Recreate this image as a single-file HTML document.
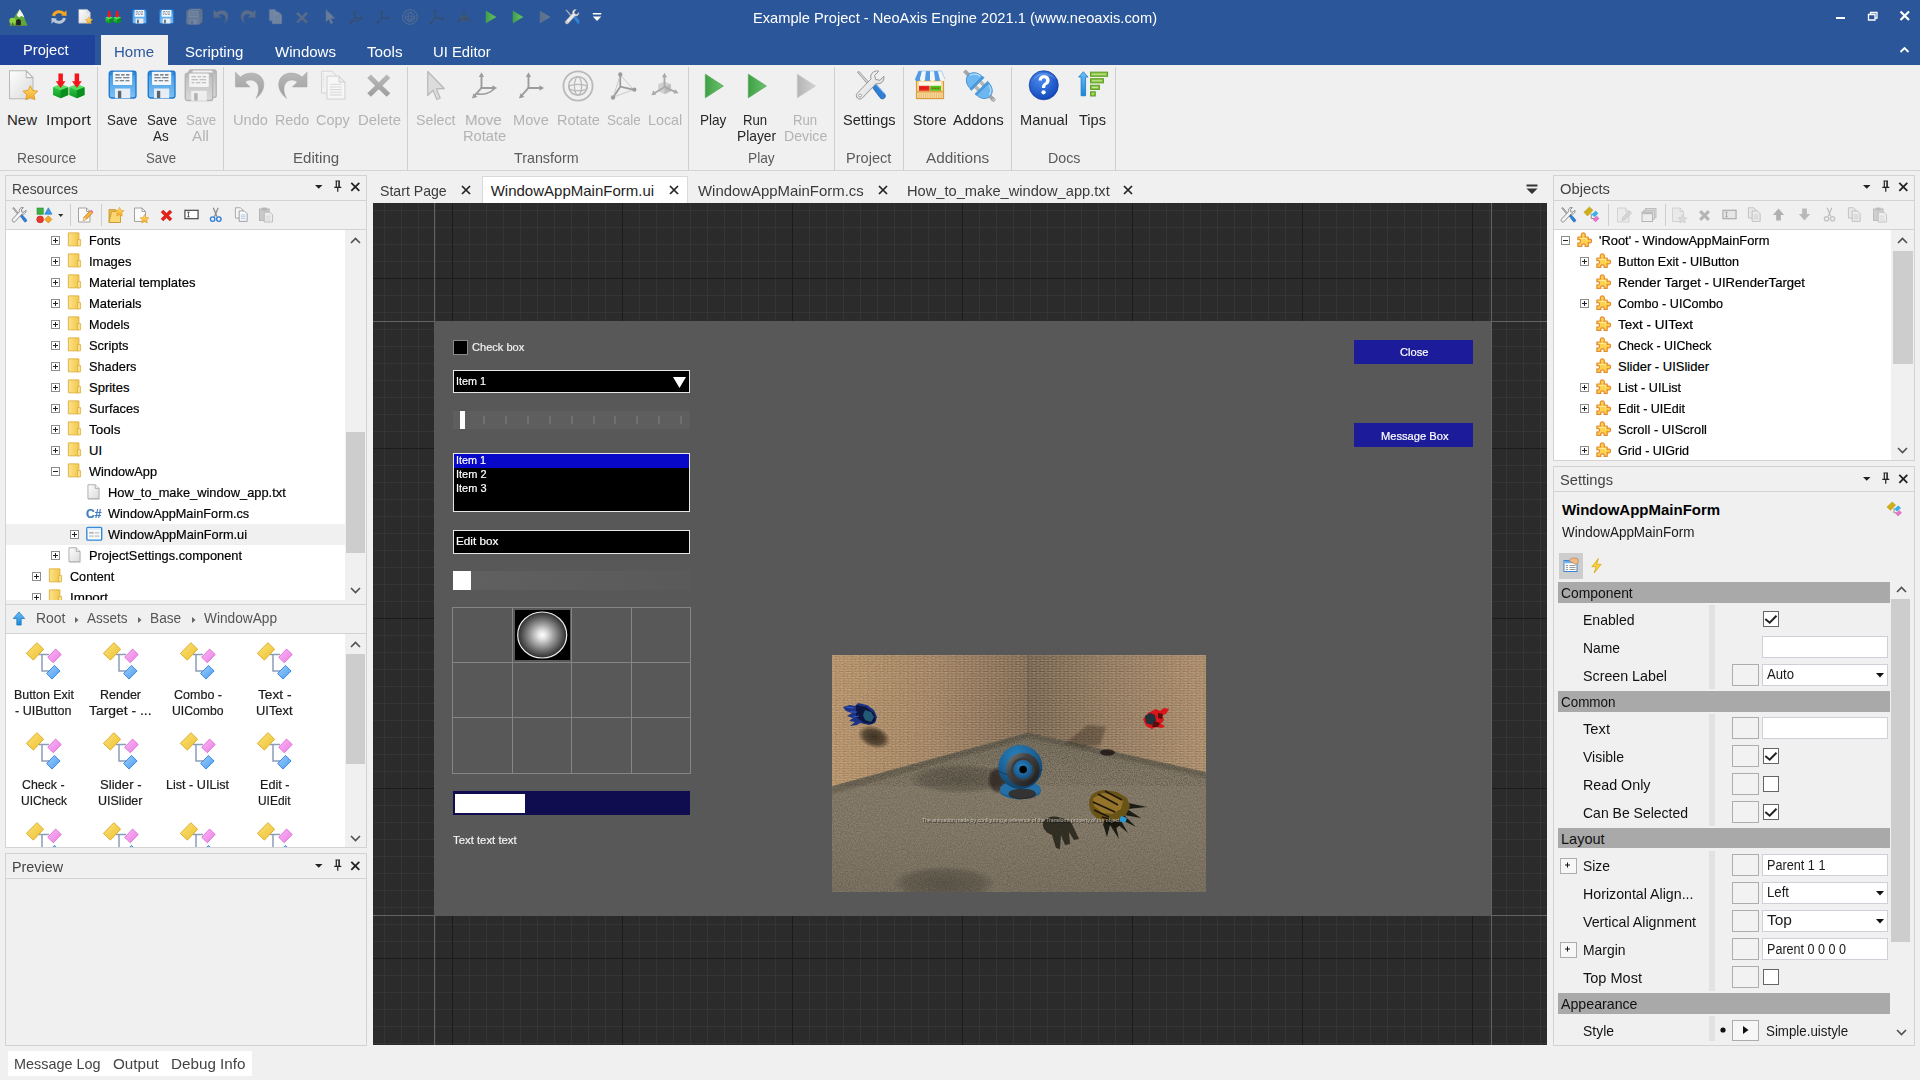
<!DOCTYPE html><html><head><meta charset="utf-8"><title>NeoAxis Engine</title><style>html,body{margin:0;padding:0}body{width:1920px;height:1080px;overflow:hidden;position:relative;background:#f0f0f0;font-family:"Liberation Sans",sans-serif}
div,span,svg{position:absolute}
.t{white-space:pre;transform-origin:0 0}.s{-webkit-text-stroke:.2px currentColor}
.i{overflow:visible}
</style></head><body><svg width="0" height="0" style="position:absolute"><defs>
<linearGradient id="gPaper" x1="0" y1="0" x2="1" y2="1"><stop offset="0" stop-color="#fefefe"/><stop offset="1" stop-color="#d9dadb"/></linearGradient>
<linearGradient id="gStar" x1="0" y1="0" x2="0" y2="1"><stop offset="0" stop-color="#ffe27a"/><stop offset="1" stop-color="#f5a623"/></linearGradient>
<linearGradient id="gCube" x1="0" y1="0" x2="0" y2="1"><stop offset="0" stop-color="#3fd14f"/><stop offset="1" stop-color="#0b9a22"/></linearGradient>
<linearGradient id="gFlop" x1="0" y1="0" x2="0" y2="1"><stop offset="0" stop-color="#3f97e4"/><stop offset="1" stop-color="#7cc0f3"/></linearGradient>
<linearGradient id="gFlopG" x1="0" y1="0" x2="0" y2="1"><stop offset="0" stop-color="#bdbdbd"/><stop offset="1" stop-color="#d9d9d9"/></linearGradient>
<linearGradient id="gGray" x1="0" y1="0" x2="0" y2="1"><stop offset="0" stop-color="#b9b9b9"/><stop offset="1" stop-color="#9d9d9d"/></linearGradient>
<linearGradient id="gPlay" x1="0" y1="0" x2="1" y2="0"><stop offset="0" stop-color="#3f9f45"/><stop offset="1" stop-color="#6cc26f"/></linearGradient>
<linearGradient id="gPlayG" x1="0" y1="0" x2="1" y2="0"><stop offset="0" stop-color="#b4b4b4"/><stop offset="1" stop-color="#d2d2d2"/></linearGradient>
<radialGradient id="gHelp" cx="0.4" cy="0.3" r="0.8"><stop offset="0" stop-color="#4a8bf0"/><stop offset="1" stop-color="#0c3fb3"/></radialGradient>
<linearGradient id="gFolder" x1="0" y1="0" x2="1" y2="0"><stop offset="0" stop-color="#fbe28a"/><stop offset="1" stop-color="#f3c84a"/></linearGradient>
<linearGradient id="gUp" x1="0" y1="0" x2="0" y2="1"><stop offset="0" stop-color="#6cc0f6"/><stop offset="1" stop-color="#1a86d8"/></linearGradient>
<linearGradient id="gMetal" x1="0" y1="0" x2="1" y2="1"><stop offset="0" stop-color="#ffffff"/><stop offset=".6" stop-color="#e4e4e4"/><stop offset="1" stop-color="#b8b8b8"/></linearGradient>
<symbol id="i-docnew" viewBox="0 0 32 32" overflow="visible" preserveAspectRatio="none"><path d="M1.5 .8H18L24.6 7.5V28.3H1.5Z" fill="url(#gPaper)" stroke="#b9b9b9" stroke-width="1"/>
<path d="M18 .8V7.5H24.6Z" fill="#f6f6f6" stroke="#b9b9b9" stroke-width="1" stroke-linejoin="round"/>
<path d="M22 15.5l2.2 4.7 5.1.6-3.8 3.5 1 5.1-4.5-2.6-4.5 2.6 1-5.1-3.8-3.5 5.1-.6z" fill="url(#gStar)" stroke="#e59a1c" stroke-width=".9" stroke-linejoin="round"/></symbol><symbol id="i-import" viewBox="0 0 32 32" overflow="visible" preserveAspectRatio="none"><g>
<path d="M1 17.5l7.5-3 7.5 3v8l-7.5 3.3L1 25.5z" fill="url(#gCube)"/>
<path d="M1 17.5l7.5 3 7.5-3-7.5-3z" fill="#58e066"/>
<path d="M8.5 20.5v8.3L16 25.5v-8z" fill="#0a8f1f"/>
<path d="M6.3 3.5h4.4v8h2.6L8.5 18.2 3.7 11.5h2.6z" fill="#f5151b"/>
<path d="M17 17.5l7.5-3 7.5 3v8l-7.5 3.3-7.5-3.3z" fill="url(#gCube)"/>
<path d="M17 17.5l7.5 3 7.5-3-7.5-3z" fill="#58e066"/>
<path d="M24.5 20.5v8.3l7.500-3.3v-8z" fill="#0a8f1f"/>
<path d="M22.3 3.500h4.400v8h2.600L24.500 18.200 19.700 11.500h2.600z" fill="#f5151b"/>
</g></symbol><symbol id="i-save" viewBox="0 0 32 32" overflow="visible" preserveAspectRatio="none"><rect x="1.3" y="1.3" width="27.4" height="27.4" rx="2.2" fill="url(#gFlop)" stroke="#1f78cf" stroke-width="1.4"/>
<rect x="5.200" y="1.800" width="19.600" height="13.500" rx=".8" fill="#f4f8fc"/>
<path d="M7.500 5h4.500m1.500 0h3.500m1.500 0h3.500M7.500 8h6.500m1.500 0h6.500M7.500 11h3m1.500 0h4.500m1.500 0h4" stroke="#555d66" stroke-width="1.100"/>
<rect x="7.200" y="19" width="15.600" height="10" fill="#e6edf5"/>
<rect x="10.200" y="21.400" width="3.400" height="7.400" fill="#5b6570"/>
<path d="M3.200 2.500v3M26.800 2.500v3" stroke="#1f78cf" stroke-width="1.200"/></symbol><symbol id="i-saveall" viewBox="0 0 32 32" overflow="visible" preserveAspectRatio="none"><g transform="translate(3.500 -1.300)"><rect x="1.3" y="1.3" width="27.4" height="27.4" rx="2.2" fill="url(#gFlopG)" stroke="#b3b3b3" stroke-width="1.4"/>
<rect x="5.200" y="1.800" width="19.600" height="13.500" rx=".8" fill="#f1f1f1"/>
<path d="M7.500 5h4.500m1.500 0h3.500m1.500 0h3.500M7.500 8h6.500m1.500 0h6.500M7.500 11h3m1.500 0h4.500m1.500 0h4" stroke="#b8b8b8" stroke-width="1.100"/>
<rect x="7.200" y="19" width="15.600" height="10" fill="#ebebeb"/>
<rect x="10.200" y="21.400" width="3.400" height="7.400" fill="#b5b5b5"/>
<path d="M3.200 2.500v3M26.800 2.500v3" stroke="#b3b3b3" stroke-width="1.200"/></g><g transform="translate(0 1.800)"><rect x="1.3" y="1.3" width="27.4" height="27.4" rx="2.2" fill="url(#gFlopG)" stroke="#b3b3b3" stroke-width="1.4"/>
<rect x="5.200" y="1.800" width="19.600" height="13.500" rx=".8" fill="#f3f3f3"/>
<path d="M7.500 5h4.500m1.500 0h3.500m1.500 0h3.500M7.500 8h6.500m1.500 0h6.500M7.500 11h3m1.500 0h4.500m1.500 0h4" stroke="#b0b0b0" stroke-width="1.100"/>
<rect x="7.200" y="19" width="15.600" height="10" fill="#eeeeee"/>
<rect x="10.200" y="21.400" width="3.400" height="7.400" fill="#b0b0b0"/>
<path d="M3.200 2.500v3M26.800 2.500v3" stroke="#b3b3b3" stroke-width="1.200"/></g></symbol><symbol id="i-undo" viewBox="0 0 32 32" overflow="visible" preserveAspectRatio="none"><path d="M1.500 2.200V17.200H16.300L11.300 12.200C16.500 8.200 23.500 10.500 24.800 17 25.600 21 24.300 25.300 22.300 28.800 29 23.500 32 16.500 29.300 10 26 2 13.800 .8 6.500 7.200Z" fill="url(#gGray)" stroke="#a8a8a8" stroke-width=".6"/></symbol><symbol id="i-redo" viewBox="0 0 32 32" overflow="visible" preserveAspectRatio="none"><g transform="translate(32 0) scale(-1 1)"><path d="M1.500 2.200V17.200H16.300L11.300 12.200C16.500 8.200 23.500 10.500 24.800 17 25.600 21 24.300 25.300 22.300 28.800 29 23.500 32 16.500 29.300 10 26 2 13.800 .8 6.500 7.200Z" fill="url(#gGray)" stroke="#a8a8a8" stroke-width=".6"/></g></symbol><symbol id="i-copy" viewBox="0 0 32 32" overflow="visible" preserveAspectRatio="none"><path d="M4.800 1.200H15.500L20.500 6v17.500H4.800z" fill="#f3f3f3" stroke="#d2d2d2"/>
<path d="M6.300 4.500h1.200m-1.200 2.500h1.200m-1.200 2.500h1.200m-1.200 2.500h1.200m-1.200 2.500h1.200m-1.200 2.500h1.200" stroke="#d8d8d8" stroke-width="1"/>
<path d="M10.500 6.200H23L29.300 12.300V29.500H10.500z" fill="#f7f7f7" stroke="#d0d0d0"/>
<path d="M23 6.200v6.100h6.300z" fill="#ececec" stroke="#d0d0d0" stroke-linejoin="round"/>
<path d="M13.500 14.500h12.500m-12.500 2.700h12.500m-12.500 2.700h12.500m-12.500 2.700h12.500m-12.500 2.700h12.500" stroke="#d9d9d9" stroke-width="1.100"/></symbol><symbol id="i-delete" viewBox="0 0 32 32" overflow="visible" preserveAspectRatio="none"><path d="M8 5.800l8 8 8-8 3.700 3.700-8 8 8 8L24 29.200l-8-8-8 8-3.700-3.700 8-8-8-8z" fill="url(#gGray)"/></symbol><symbol id="i-select" viewBox="0 0 32 32" overflow="visible" preserveAspectRatio="none"><path d="M10.200 1.500V25.500L15.800 20.200 19.800 29.500 23.300 28 19.300 18.800 27.500 18.500Z" fill="#dcdcdc" stroke="#b8b8b8" stroke-width="1.300" stroke-linejoin="round"/></symbol><symbol id="i-moverot" viewBox="0 0 32 32" overflow="visible" preserveAspectRatio="none"><g stroke="#9c9c9c" stroke-width="2" fill="#9c9c9c" stroke-linecap="round"><path d="M13.300 18.500V5.500" /><path d="M13.300 18.500H26"/><path d="M13.300 18.500L5.500 27"/>
<path d="M13.300 2.200l2.800 5h-5.600z M30 18.500l-5 2.800v-5.600z M3.200 29.500l1.600-5.500 4.100 3.800z" stroke="none"/>
<path d="M8 24.500C15 26 23 24 27 19" fill="none" stroke-width="1.600"/></g></symbol><symbol id="i-move" viewBox="0 0 32 32" overflow="visible" preserveAspectRatio="none"><g stroke="#9c9c9c" stroke-width="2" fill="#9c9c9c" stroke-linecap="round"><path d="M13.300 18.500V5.500" /><path d="M13.300 18.500H26"/><path d="M13.300 18.500L5.500 27"/>
<path d="M13.300 2.200l2.800 5h-5.600z M30 18.500l-5 2.800v-5.600z M3.200 29.500l1.600-5.500 4.100 3.800z" stroke="none"/></g></symbol><symbol id="i-rotate" viewBox="0 0 32 32" overflow="visible" preserveAspectRatio="none"><g fill="none" stroke="#b9b9b9"><circle cx="16" cy="16" r="14.600" stroke-width="1.800"/><circle cx="16" cy="16" r="9.300" stroke-width="1.600"/>
<ellipse cx="16" cy="16" rx="3.600" ry="9.300" stroke-width="1.300"/><ellipse cx="16" cy="17.500" rx="9.300" ry="3.200" stroke-width="1.300"/></g></symbol><symbol id="i-scale" viewBox="0 0 32 32" overflow="visible" preserveAspectRatio="none"><g stroke="#9c9c9c" fill="#9c9c9c"><path d="M12 16.500V4M12 16.500L26 19.500M12 16.500L4.500 27.500" stroke-width="1.900"/>
<path d="M12 4L26 19.500L4.500 27.500Z" fill="none" stroke-width=".8" stroke="#bdbdbd"/>
<circle cx="12" cy="3.600" r="2.300" stroke="none"/><circle cx="27" cy="19.500" r="2.300" stroke="none"/><circle cx="4.300" cy="27.800" r="2.300" stroke="none"/></g></symbol><symbol id="i-local" viewBox="0 0 32 32" overflow="visible" preserveAspectRatio="none"><g stroke="#a9a9a9" fill="#a9a9a9"><path d="M9.500 14.500l6.500-2.500 6.500 2.500v7.500L16 25l-6.500-3z" fill="#d0d0d0" stroke="none"/><path d="M16 17.500v7.500l6.500-3v-7.500z" fill="#bcbcbc" stroke="none"/>
<path d="M16 17.500V6M16 17.500L27 22.500M16 17.500L5.500 24" stroke-width="1.900"/>
<path d="M16 2.800l2.600 4.800h-5.200z M30.500 24l-5.400.3 2.200-4.500z M2.500 26l2-5 3 4.400z" stroke="none"/></g></symbol><symbol id="i-play" viewBox="0 0 32 32" overflow="visible" preserveAspectRatio="none"><path d="M6 4.200V27.800L26.200 16Z" fill="url(#gPlay)" stroke="#4aa84f" stroke-width=".8" stroke-linejoin="round"/></symbol><symbol id="i-playg" viewBox="0 0 32 32" overflow="visible" preserveAspectRatio="none"><path d="M6 4.200V27.800L26.200 16Z" fill="url(#gPlayG)" stroke="#c4c4c4" stroke-width=".8" stroke-linejoin="round"/></symbol><symbol id="i-settings" viewBox="0 0 32 32" overflow="visible" preserveAspectRatio="none"><g>
<path d="M3.500 2.200L5 1.500 16.500 14.500 14.800 16Z" fill="#d9d9d9" stroke="#8d8d8d" stroke-width=".8"/>
<path d="M15 13.200l3-2.600L30.600 24.800c1.200 1.500.9 3.300-.3 4.300s-3 1-4.200-.5z" fill="#2f7fd6" stroke="#1b5fae" stroke-width=".8"/>
<path d="M17 12l1.500-1.300L30.200 24" stroke="#7db9f2" stroke-width="1.100" fill="none"/>
<path d="M29.800 6.500c.6 2.800-.3 5.300-2.600 6.800-1.600 1-3.400 1.200-5 .7L8.500 28.800c-1.300 1.500-3.500 1.600-5 .3s-1.600-3.500-.3-5L17 9.200c-.9-2.700.1-5.700 2.600-7.300 1.700-1 3.500-1.200 5.200-.6L20.500 5.800l1.300 4 4.100.8z" fill="url(#gMetal)" stroke="#8a8a8a" stroke-width=".9" stroke-linejoin="round"/>
<circle cx="6" cy="26.300" r="1.500" fill="#f5f5f5" stroke="#8a8a8a" stroke-width=".7"/></g></symbol><symbol id="i-store" viewBox="0 0 32 32" overflow="visible" preserveAspectRatio="none"><g>
<rect x="2.500" y="11" width="27" height="18.500" fill="#f7d9a0" stroke="#d99a3e" stroke-width="1.200"/>
<rect x="4.800" y="12" width="22.400" height="5" fill="#fff6e4"/>
<rect x="5" y="16.300" width="10.500" height="5.200" fill="#e8251f"/><rect x="16.200" y="16.300" width="10.800" height="5.200" fill="#4cc417"/>
<path d="M6.500 18.500h7M17.500 18.800h7.500" stroke="#b8160f" stroke-width=".8" stroke-dasharray="2 1"/>
<rect x="2.500" y="21.500" width="27" height="1.800" fill="#e3a54b"/>
<path d="M5 24v5M7.200 24v5M9.400 24v5M11.600 24v5M13.800 24v5M16 24v5M18.200 24v5M20.400 24v5M22.600 24v5M24.800 24v5M27 24v5" stroke="#e9b566" stroke-width=".9"/>
<path d="M4.500 1L1 9.500c0 2.600 5 2.600 5 0L8 1z" fill="#4f9be8"/><path d="M8 1L6 9.500c0 2.600 5 2.600 5 0L12 1z" fill="#f5f5f5"/>
<path d="M12 1L11 9.500c0 2.600 5 2.600 5 0V1z" fill="#4f9be8"/><path d="M16 1v8.500c0 2.600 5 2.600 5 0L20 1z" fill="#f5f5f5"/>
<path d="M20 1l1 8.500c0 2.600 5 2.600 5 0L24 1z" fill="#4f9be8"/><path d="M24 1l2 8.500c0 2.600 5 2.600 5 0L27.500 1z" fill="#f5f5f5"/>
<path d="M4.500 1h23L31 9.500" fill="none" stroke="#7fb4ea" stroke-width=".6"/></g></symbol><symbol id="i-addons" viewBox="0 0 32 32" overflow="visible" preserveAspectRatio="none"><g transform="translate(16.200 15.500) rotate(45)">
<rect x="-20.500" y="-1.600" width="6" height="3.200" fill="#a6a6a6" stroke="#858585" stroke-width=".5"/>
<path d="M-3.500 -8.800V8.800C-10.500 8.800 -15 4.500 -15 0S-10.500 -8.800 -3.500 -8.800Z" fill="#6db7f1" stroke="#3f8fd4" stroke-width=".9"/>
<path d="M-5.500 -7.500C-10 -7 -13 -3.500 -13.500 -.5" stroke="#b5dcf9" stroke-width="1.300" fill="none"/>
<rect x="-3.500" y="-9.300" width="2.200" height="18.600" fill="#4a9be0" stroke="#3585cc" stroke-width=".5"/>
<rect x="-1.300" y="-5" width="5" height="2.800" fill="#b9b9b9" stroke="#858585" stroke-width=".5"/><rect x="-1.300" y="2.200" width="5" height="2.800" fill="#b9b9b9" stroke="#858585" stroke-width=".5"/>
<rect x="3.700" y="-9.300" width="2.200" height="18.600" fill="#4a9be0" stroke="#3585cc" stroke-width=".5"/>
<path d="M5.900 -8.800V8.800C12.500 8.800 16.500 4.500 16.500 0S12.500 -8.800 5.900 -8.800Z" fill="#6db7f1" stroke="#3f8fd4" stroke-width=".9"/>
<path d="M8 -7.300C12 -6.500 14.500 -3.500 15 -.5" stroke="#b5dcf9" stroke-width="1.300" fill="none"/>
<rect x="16.500" y="-1.600" width="4.500" height="3.200" fill="#a6a6a6" stroke="#858585" stroke-width=".5"/><circle cx="21.500" cy="0" r="1.800" fill="#c2c2c2" stroke="#858585" stroke-width=".5"/></g></symbol><symbol id="i-manual" viewBox="0 0 32 32" overflow="visible" preserveAspectRatio="none"><circle cx="16" cy="15.500" r="14.800" fill="url(#gHelp)" stroke="#0b389f" stroke-width=".7"/>
<path d="M2.500 14C6 6 20 2 28.500 9.500 24 1.500 9 -1.500 2.500 14z" fill="#fff" opacity=".18"/>
<path d="M10.800 10.700c0-3.400 2.400-5.400 5.500-5.400 3.300 0 5.700 2 5.700 5 0 2.500-1.500 3.700-3 4.800-1.100.8-1.500 1.500-1.500 3.200h-3.400c0-2.700.8-3.800 2.400-5 1.100-.8 1.800-1.500 1.800-2.700 0-1.300-.9-2.100-2.100-2.100-1.300 0-2.100.9-2.100 2.200z" fill="#fff"/><circle cx="15.800" cy="22.700" r="2.200" fill="#fff"/></symbol><symbol id="i-tips" viewBox="0 0 32 32" overflow="visible" preserveAspectRatio="none"><g><path d="M5.500 1.800L10.300 7.500H7.800V27.500H3.200V7.500H.7Z" fill="url(#gUp)" stroke="#1676c4" stroke-width=".8" stroke-linejoin="round"/>
<g fill="#8cc63f" stroke="#5a9e23" stroke-width="1.100"><rect x="13" y="2.300" width="17.500" height="4.400"/><rect x="13" y="9.300" width="13.200" height="4.400"/><rect x="13" y="16.300" width="9" height="4.400"/><rect x="13" y="23.300" width="4.800" height="4.400"/></g>
<path d="M14.500 4.500h14.500M14.500 11.500h10.200M14.500 18.500h6M14.500 25.500h1.800" stroke="#c5e59a" stroke-width="1.200"/></g></symbol><symbol id="i-logo" viewBox="0 0 16 16" overflow="visible" preserveAspectRatio="none"><g transform="scale(.5)"><path d="M1 31L13 9 18 2 23 10 31 31Z" fill="#5fa83a"/><path d="M18 2l5 8 3 7-5-3-4 3-4-4z" fill="#f4f4f4"/><path d="M12 31v-8c0-4 8-4 8 0v8z" fill="#222"/><circle cx="6" cy="23" r="5.500" fill="#8fd43f"/><rect x="5" y="26" width="2" height="5" fill="#7a4a20"/><path d="M0 31h32v1H0z" fill="#6a8a3a"/></g></symbol><symbol id="i-refresh" viewBox="0 0 16 16" overflow="visible" preserveAspectRatio="none"><g fill="none" stroke-width="3"><path d="M2.500 7C3.500 2.500 10 1 13 5" stroke="#f5a623"/><path d="M13.500 9C12.500 13.500 6 15 3 11" stroke="#b9c6d6"/></g><path d="M10 6.500l5.500.5V1.200z" fill="#f5a623"/><path d="M6 9.500L.5 9v5.800z" fill="#b9c6d6"/></symbol><symbol id="i-caretdn" viewBox="0 0 16 16" overflow="visible" preserveAspectRatio="none"><path d="M3 4h9v1.600H3zM3 7.500h9L7.500 12z" fill="#fff"/></symbol><symbol id="i-tools16" viewBox="0 0 16 16" overflow="visible" preserveAspectRatio="none"><g transform="scale(.5)"><path d="M3.500 2.200L5.500 1.200 16.500 14.500 14.800 16Z" fill="#e4e4e4" stroke="#777" stroke-width="1.600"/>
<path d="M15 13.200l3-2.600L30.600 24.800c1.200 1.500.9 3.300-.3 4.300s-3 1-4.200-.5z" fill="#2f7fd6" stroke="#1b5fae" stroke-width="1.200"/>
<path d="M29.800 6.500c.6 2.800-.3 5.300-2.600 6.800-1.600 1-3.400 1.200-5 .7L8.500 28.800c-1.300 1.500-3.500 1.600-5 .3s-1.600-3.500-.3-5L17 9.200c-.9-2.700.1-5.700 2.600-7.300 1.700-1 3.500-1.200 5.200-.6L20.500 5.800l1.300 4 4.100.8z" fill="#f4f4f4" stroke="#7a7a7a" stroke-width="1.700" stroke-linejoin="round"/></g></symbol><symbol id="i-shapes" viewBox="0 0 16 16" overflow="visible" preserveAspectRatio="none"><rect x="1" y="1" width="6" height="6" fill="#3cb043" stroke="#27862d" stroke-width=".6"/><path d="M12 .800L15.500 7H8.500z" fill="#3d9be9" stroke="#1f78c8" stroke-width=".6"/><circle cx="4" cy="12" r="3.300" fill="#ea3a2d" stroke="#b9261b" stroke-width=".6"/><path d="M12 8.500L15.500 12 12 15.500 8.500 12z" fill="#f6a623" stroke="#cf8512" stroke-width=".6"/></symbol><symbol id="i-edit" viewBox="0 0 16 16" overflow="visible" preserveAspectRatio="none"><path d="M1.500 1h8l3.500 3.500V15H1.500z" fill="#fbfbfb" stroke="#9a9a9a" stroke-width=".9"/><path d="M9.500 1v3.500H13" fill="none" stroke="#9a9a9a" stroke-width=".9"/><path d="M6 13.500l1-3.300 6.300-6.500 2.300 2.300-6.400 6.500z" fill="#f7b13c" stroke="#b9772a" stroke-width=".7"/><path d="M6 13.500l1-3.300 2.200 2.300z" fill="#f6d7b0"/><path d="M13.300 3.700l1-1 2 2.300-.8 1z" fill="#e86a9a"/></symbol><symbol id="i-editg" viewBox="0 0 16 16" overflow="visible" preserveAspectRatio="none"><path d="M1.500 1h8l3.500 3.500V15H1.500z" fill="#ebebeb" stroke="#cfcfcf" stroke-width=".9"/><path d="M9.500 1v3.500H13" fill="none" stroke="#cfcfcf" stroke-width=".9"/><path d="M6 13.500l1-3.300 6.300-6.500 2.300 2.300-6.400 6.500z" fill="#d6d6d6" stroke="#c2c2c2" stroke-width=".7"/></symbol><symbol id="i-newfolder" viewBox="0 0 16 16" overflow="visible" preserveAspectRatio="none"><path d="M1 2.500h6.500l1 1.500H11V15.500H1z" fill="#e9b949" stroke="#c4922b" stroke-width=".8"/><path d="M3.500 4.500h9V15.500H1z" fill="#f9d772" stroke="#c4922b" stroke-width=".8" stroke-linejoin="round"/><path d="M11.500.300l1.500 3 3 .4-2.200 2.200.5 3.200-2.800-1.500-2.800 1.500.5-3.200L7 3.700l3-.4z" fill="url(#gStar)" stroke="#e59a1c" stroke-width=".6" stroke-linejoin="round"/></symbol><symbol id="i-newfile" viewBox="0 0 16 16" overflow="visible" preserveAspectRatio="none"><path d="M1.500 1h7.500l3.500 3.500V14.500H1.500z" fill="#fbfbfb" stroke="#9a9a9a" stroke-width=".9"/><path d="M9 1v3.500h3.500" fill="none" stroke="#9a9a9a" stroke-width=".9"/><path d="M11.500 7.500l1.400 2.900 3 .4-2.200 2.100.5 3.100-2.700-1.500L8.800 16l.5-3.100-2.200-2.100 3-.4z" fill="url(#gStar)" stroke="#e59a1c" stroke-width=".6" stroke-linejoin="round"/></symbol><symbol id="i-newfileg" viewBox="0 0 16 16" overflow="visible" preserveAspectRatio="none"><path d="M1.500 1h7.500l3.500 3.500V14.500H1.500z" fill="#e9e9e9" stroke="#cfcfcf" stroke-width=".9"/><path d="M9 1v3.500h3.500" fill="none" stroke="#cfcfcf" stroke-width=".9"/><path d="M11.500 7.500l1.400 2.900 3 .4-2.200 2.100.5 3.100-2.700-1.500L8.800 16l.5-3.100-2.200-2.100 3-.4z" fill="#d9d9d9" stroke="#c9c9c9" stroke-width=".6" stroke-linejoin="round"/></symbol><symbol id="i-redx" viewBox="0 0 16 16" overflow="visible" preserveAspectRatio="none"><path d="M2.200 4.500L4.500 2.200 8 5.700l3.500-3.500 2.300 2.300L10.300 8l3.500 3.500-2.300 2.300L8 10.300l-3.500 3.500-2.300-2.300L5.700 8z" fill="#e8201a" stroke="#b81510" stroke-width=".5"/></symbol><symbol id="i-grayx" viewBox="0 0 16 16" overflow="visible" preserveAspectRatio="none"><path d="M2.200 4.500L4.500 2.200 8 5.700l3.500-3.500 2.300 2.300L10.300 8l3.500 3.500-2.300 2.300L8 10.300l-3.500 3.500-2.300-2.300L5.700 8z" fill="#b5b5b5"/></symbol><symbol id="i-rename" viewBox="0 0 16 16" overflow="visible" preserveAspectRatio="none"><rect x="1" y="3.500" width="14" height="9" fill="#fff" stroke="#3a3a3a" stroke-width="1.200"/><path d="M3.500 5.500h2.500M3.500 10.500h2.500M4.750 5.500v5" stroke="#3a3a3a" stroke-width=".9"/></symbol><symbol id="i-renameg" viewBox="0 0 16 16" overflow="visible" preserveAspectRatio="none"><rect x="1" y="3.500" width="14" height="9" fill="#e6e6e6" stroke="#a8a8a8" stroke-width="1.200"/><path d="M3.500 5.500h2.500M3.500 10.500h2.500M4.750 5.500v5" stroke="#9a9a9a" stroke-width=".9"/></symbol><symbol id="i-cut" viewBox="0 0 16 16" overflow="visible" preserveAspectRatio="none"><path d="M5.500 .8L9.300 10M10.500 .8L6.700 10" stroke="#8a8a8a" stroke-width="1.300" fill="none"/><circle cx="4.800" cy="12.500" r="2.300" fill="none" stroke="#2f7fd6" stroke-width="1.400"/><circle cx="11.200" cy="12.500" r="2.300" fill="none" stroke="#2f7fd6" stroke-width="1.400"/></symbol><symbol id="i-cutg" viewBox="0 0 16 16" overflow="visible" preserveAspectRatio="none"><path d="M5.500 .8L9.300 10M10.500 .8L6.700 10" stroke="#bdbdbd" stroke-width="1.300" fill="none"/><circle cx="4.800" cy="12.500" r="2.300" fill="none" stroke="#c2c2c2" stroke-width="1.400"/><circle cx="11.200" cy="12.500" r="2.300" fill="none" stroke="#c2c2c2" stroke-width="1.400"/></symbol><symbol id="i-copy16" viewBox="0 0 16 16" overflow="visible" preserveAspectRatio="none"><path d="M1.500 .8h5.500l2.500 2.500v8.500h-8z" fill="#f6f6f6" stroke="#9c9c9c" stroke-width=".9"/><path d="M5.500 4.200h5.500l3 3V15.300H5.500z" fill="#fcfcfc" stroke="#8f8f8f" stroke-width=".9"/><path d="M7.200 8.500h5M7.200 10.500h5M7.200 12.500h5" stroke="#8fb4da" stroke-width=".8"/></symbol><symbol id="i-paste" viewBox="0 0 16 16" overflow="visible" preserveAspectRatio="none"><rect x="1.500" y="2" width="10" height="12" fill="#c9c9c9" stroke="#b0b0b0" stroke-width=".9"/><rect x="4" y=".6" width="5" height="3" fill="#b5b5b5"/><path d="M6.500 5.500h6l2.500 2.500v7.500h-8.500z" fill="#ededed" stroke="#b8b8b8" stroke-width=".9"/><path d="M8 9.500h5M8 11.500h5M8 13.500h5" stroke="#cfcfcf" stroke-width=".8"/></symbol><symbol id="i-folder" viewBox="0 0 16 16" overflow="visible" preserveAspectRatio="none"><path d="M1.400 .9H12.300V14.300H1.400Z" fill="url(#gFolder)" stroke="#dcae3a" stroke-width=".9"/><path d="M10.800 7.800H14V14.300H10.800Z" fill="#fbe08a" stroke="#dcae3a" stroke-width=".8"/></symbol><symbol id="i-file" viewBox="0 0 16 16" overflow="visible" preserveAspectRatio="none"><path d="M2 .8h7.500L13.500 4.500V15.200H2z" fill="url(#gPaper)" stroke="#a4a4a4" stroke-width=".9"/><path d="M9.500 .8V4.500h4" fill="#f2f2f2" stroke="#a4a4a4" stroke-width=".9" stroke-linejoin="round"/><path d="M2.500 15.900H14" stroke="#c9c9c9" stroke-width=".8"/></symbol><symbol id="i-uiicon" viewBox="0 0 16 16" overflow="visible" preserveAspectRatio="none"><rect x=".8" y="1.300" width="14.400" height="13.400" rx="1" fill="#fafcfe" stroke="#2f86d6" stroke-width="1.300"/><rect x="3" y="6" width="4.500" height="2" fill="#b9b9b9"/><rect x="8.500" y="6" width="4.500" height="2" fill="#d0d0d0"/><rect x="3" y="9.500" width="4.500" height="2" fill="#d0d0d0"/><rect x="8.500" y="9.500" width="4.500" height="2" fill="#d0d0d0"/><rect x="1.500" y="2" width="13" height="2" fill="#dcebf8"/></symbol><symbol id="i-uparrow" viewBox="0 0 16 16" overflow="visible" preserveAspectRatio="none"><path d="M8 1L14.500 8H10.500V15H5.500V8H1.500Z" fill="url(#gUp)" stroke="#1676c4" stroke-width=".8" stroke-linejoin="round"/></symbol><symbol id="i-upg" viewBox="0 0 16 16" overflow="visible" preserveAspectRatio="none"><path d="M8 1.500L14 8.500H10.500V14.500H5.500V8.500H2Z" fill="#b0b0b0"/></symbol><symbol id="i-downg" viewBox="0 0 16 16" overflow="visible" preserveAspectRatio="none"><path d="M8 14.500L14 7.500H10.500V1.500H5.500V7.500H2Z" fill="#b9b9b9"/></symbol><symbol id="i-windowsg" viewBox="0 0 16 16" overflow="visible" preserveAspectRatio="none"><rect x="4.500" y="1.500" width="10.500" height="9" fill="#dcdcdc" stroke="#bdbdbd"/><rect x="2.800" y="3.300" width="10.500" height="9" fill="#e2e2e2" stroke="#bdbdbd"/><rect x="1" y="5" width="10.500" height="9.500" fill="#ededed" stroke="#b5b5b5"/><rect x="1" y="5" width="10.500" height="2.200" fill="#bdbdbd"/></symbol><symbol id="i-puzzle" viewBox="0 0 16 16" overflow="visible" preserveAspectRatio="none"><path d="M.9 5H4.800C3.800 3.800 4 .9 6.300 .9S8.800 3.800 7.800 5H11.200V7.600C12.400 6.600 14.600 7 14.600 9S12.400 11.400 11.200 10.400V14.400H8C8.800 13.400 8.300 11.800 6.500 11.800S4.200 13.400 5 14.400H.9V10.800C2 11.600 3.500 11 3.500 9.300S2 7 .9 7.800Z" fill="#fdd34d" stroke="#e68a2e" stroke-width="1.200" stroke-linejoin="round"/><path d="M2.500 6.500H9.500V8.500" stroke="#ffeb9c" stroke-width="1" fill="none"/></symbol><symbol id="i-comp16" viewBox="0 0 16 16" overflow="visible" preserveAspectRatio="none"><path d="M7.250 6.500V11.500H10" fill="none" stroke="#8a8a8a" stroke-width="1"/>
<path d="M5.400 -.1L9 3.300 3.500 9 -.1 5.200z" fill="#cfae1c" stroke="#b9980f" stroke-width=".5"/>
<path d="M11.600 4.100L14 6.400 10.400 9.750 8 7.400z" fill="#30b4ee" stroke="#1b96d3" stroke-width=".5"/>
<path d="M12.600 9.100L15 11.400 11.500 14.900 9.100 12.400z" fill="#ee72cb" stroke="#d24fae" stroke-width=".5"/></symbol><symbol id="i-comp" viewBox="0 0 36 38" overflow="visible" preserveAspectRatio="none"><defs><linearGradient id="gY" x1="0" y1="0" x2="1" y2="1"><stop offset="0" stop-color="#fbe27a"/><stop offset="1" stop-color="#eec12f"/></linearGradient>
<linearGradient id="gPk" x1="0" y1="0" x2="1" y2="1"><stop offset="0" stop-color="#fbb6f5"/><stop offset="1" stop-color="#ec7fe4"/></linearGradient>
<linearGradient id="gBl" x1="0" y1="0" x2="1" y2="1"><stop offset="0" stop-color="#9fd0fb"/><stop offset="1" stop-color="#4a9bef"/></linearGradient></defs>
<path d="M13 12.500H23M16 12.500V29H23" fill="none" stroke="#8c9cb8" stroke-width="1.500"/>
<path d="M10.900 .7L17.600 7.200 7.400 18.100.4 11.400z" fill="url(#gY)" stroke="#dcae28" stroke-width="1" stroke-linejoin="round"/>
<path d="M29.600 7L35.200 12.500 27.300 20.700 21.700 15.300z" fill="url(#gPk)" stroke="#dd6fd4" stroke-width=".9" stroke-linejoin="round"/>
<path d="M28.500 23.400L34.100 29 26 37.100 20.600 31.500z" fill="url(#gBl)" stroke="#2f7fe0" stroke-width=".9" stroke-linejoin="round"/></symbol><symbol id="i-props" viewBox="0 0 16 16" overflow="visible" preserveAspectRatio="none"><rect x="1" y="3.500" width="13" height="11" fill="#fdfdfd" stroke="#3b86d0" stroke-width="1"/><rect x="1.500" y="4" width="12" height="2.200" fill="#6fb0ec"/><path d="M3 8.500h2M3 10.500h2M3 12.500h2M6.500 8.500h6M6.500 10.500h6M6.500 12.500h6" stroke="#8d8d8d" stroke-width=".9"/><path d="M6 3.500c2-2.500 5-3 8.500-2l1 3.500-2.500 2.500-3-1.500z" fill="#f0b98a" stroke="#b9773f" stroke-width=".6"/></symbol><symbol id="i-bolt" viewBox="0 0 16 16" overflow="visible" preserveAspectRatio="none"><path d="M10 .5L3 9h4.500L5.500 15.500 13 6.500H8.300z" fill="#f9d23c" stroke="#d9a514" stroke-width=".8" stroke-linejoin="round"/></symbol><symbol id="i-copy16g" viewBox="0 0 16 16" overflow="visible" preserveAspectRatio="none"><path d="M1.500 .8h5.500l2.500 2.500v8.500h-8z" fill="#e8e8e8" stroke="#bcbcbc" stroke-width=".9"/><path d="M5.500 4.200h5.500l3 3V15.300H5.500z" fill="#ececec" stroke="#b8b8b8" stroke-width=".9"/><path d="M7.200 8.500h5M7.200 10.500h5M7.200 12.500h5" stroke="#c6c6c6" stroke-width=".8"/></symbol></defs></svg><div style="left:0px;top:0px;width:1920px;height:65px;background:#2b579a;"></div>
<div style="left:0px;top:35px;width:95px;height:30px;background:#1f439b;"></div>
<div style="left:101px;top:35px;width:67px;height:31px;background:#f0f0f0;"></div>
<span class="t" style="left:753.00px;top:10.30px;font-size:15px;line-height:15px;color:#fff;transform:scaleX(0.9770);">Example Project - NeoAxis Engine 2021.1 (www.neoaxis.com)</span>
<svg class="i" style="left:9px;top:8px;width:19px;height:18px;"><use href="#i-logo"/></svg>
<svg class="i" style="left:51px;top:9px;width:16px;height:16px;"><use href="#i-refresh"/></svg>
<svg class="i" style="left:78px;top:9px;width:16px;height:16px;"><use href="#i-docnew"/></svg>
<svg class="i" style="left:105px;top:9px;width:16px;height:16px;"><use href="#i-import"/></svg>
<svg class="i" style="left:132px;top:9px;width:16px;height:16px;"><use href="#i-save"/></svg>
<svg class="i" style="left:159px;top:9px;width:16px;height:16px;"><use href="#i-save"/></svg>
<svg class="i" style="left:186px;top:9px;width:16px;height:16px;opacity:.55;filter:brightness(.72) saturate(.5);"><use href="#i-saveall"/></svg>
<svg class="i" style="left:213px;top:9px;width:16px;height:16px;opacity:.55;filter:brightness(.72) saturate(.5);"><use href="#i-undo"/></svg>
<svg class="i" style="left:240px;top:9px;width:16px;height:16px;opacity:.55;filter:brightness(.72) saturate(.5);"><use href="#i-redo"/></svg>
<svg class="i" style="left:267px;top:9px;width:16px;height:16px;opacity:.55;filter:brightness(.72) saturate(.5);"><use href="#i-copy"/></svg>
<svg class="i" style="left:294px;top:9px;width:16px;height:16px;opacity:.55;filter:brightness(.72) saturate(.5);"><use href="#i-delete"/></svg>
<svg class="i" style="left:321px;top:9px;width:16px;height:16px;opacity:.55;filter:brightness(.72) saturate(.5);"><use href="#i-select"/></svg>
<svg class="i" style="left:348px;top:9px;width:16px;height:16px;opacity:.6;filter:brightness(.42);"><use href="#i-moverot"/></svg>
<svg class="i" style="left:375px;top:9px;width:16px;height:16px;opacity:.6;filter:brightness(.42);"><use href="#i-move"/></svg>
<svg class="i" style="left:402px;top:9px;width:16px;height:16px;opacity:.55;filter:brightness(.72) saturate(.5);"><use href="#i-rotate"/></svg>
<svg class="i" style="left:429px;top:9px;width:16px;height:16px;opacity:.6;filter:brightness(.42);"><use href="#i-scale"/></svg>
<svg class="i" style="left:456px;top:9px;width:16px;height:16px;opacity:.6;filter:brightness(.42);"><use href="#i-local"/></svg>
<svg class="i" style="left:483px;top:9px;width:16px;height:16px;"><use href="#i-play"/></svg>
<svg class="i" style="left:510px;top:9px;width:16px;height:16px;"><use href="#i-play"/></svg>
<svg class="i" style="left:537px;top:9px;width:16px;height:16px;opacity:.55;filter:brightness(.72) saturate(.5);"><use href="#i-playg"/></svg>
<svg class="i" style="left:564px;top:9px;width:16px;height:16px;"><use href="#i-settings"/></svg>
<svg class="i" style="left:590px;top:9px;width:15px;height:16px;"><use href="#i-caretdn"/></svg>
<svg class="i" style="left:1820px;top:0;width:100px;height:65px" viewBox="0 0 100 65"><g stroke="#fff" fill="none"><path d="M16 18h9" stroke-width="2"/><path d="M48.500 14.500h6.500v5.500h-6.500zM50.500 14.500v-2h6.500v5.500h-2" stroke-width="1.300"/><path d="M80.500 11.500l8.500 8.500m0-8.500l-8.500 8.500" stroke-width="2.200"/><path d="M80.500 52l4-4 4 4" stroke-width="1.800"/></g></svg>
<span class="t" style="left:23.30px;top:41.88px;font-size:15.5px;line-height:15.5px;color:#fff;transform:scaleX(0.9472);">Project</span>
<span class="t" style="left:114.30px;top:43.88px;font-size:15.5px;line-height:15.5px;color:#2b579a;transform:scaleX(0.9671);">Home</span>
<span class="t" style="left:185.00px;top:43.88px;font-size:15.5px;line-height:15.5px;color:#fff;transform:scaleX(0.9666);">Scripting</span>
<span class="t" style="left:275.00px;top:43.88px;font-size:15.5px;line-height:15.5px;color:#fff;transform:scaleX(0.9699);">Windows</span>
<span class="t" style="left:366.70px;top:43.88px;font-size:15.5px;line-height:15.5px;color:#fff;transform:scaleX(0.9838);">Tools</span>
<span class="t" style="left:433.30px;top:43.88px;font-size:15.5px;line-height:15.5px;color:#fff;transform:scaleX(0.9567);">UI Editor</span>
<div style="left:0px;top:65px;width:1920px;height:105px;background:#f0f0f0;"></div>
<div style="left:0px;top:170px;width:1920px;height:1px;background:#d4d4d4;"></div>
<div style="left:97px;top:67px;width:1px;height:103px;background:#cfcfcf;"></div>
<div style="left:223px;top:67px;width:1px;height:103px;background:#cfcfcf;"></div>
<div style="left:407px;top:67px;width:1px;height:103px;background:#cfcfcf;"></div>
<div style="left:688px;top:67px;width:1px;height:103px;background:#cfcfcf;"></div>
<div style="left:834px;top:67px;width:1px;height:103px;background:#cfcfcf;"></div>
<div style="left:903px;top:67px;width:1px;height:103px;background:#cfcfcf;"></div>
<div style="left:1011px;top:67px;width:1px;height:103px;background:#cfcfcf;"></div>
<div style="left:1115px;top:67px;width:1px;height:103px;background:#cfcfcf;"></div>
<svg class="i" style="left:7.7px;top:69.5px;width:32.5px;height:32.5px;"><use href="#i-docnew"/></svg>
<svg class="i" style="left:52.2px;top:69.8px;width:32.5px;height:31.5px;"><use href="#i-import"/></svg>
<svg class="i" style="left:108.3px;top:70.3px;width:31.2px;height:31.2px;"><use href="#i-save"/></svg>
<svg class="i" style="left:147.2px;top:70.3px;width:31.2px;height:31.2px;"><use href="#i-save"/></svg>
<svg class="i" style="left:184px;top:69.5px;width:32px;height:32px;"><use href="#i-saveall"/></svg>
<svg class="i" style="left:234px;top:69.5px;width:31.5px;height:31.5px;"><use href="#i-undo"/></svg>
<svg class="i" style="left:277px;top:69.5px;width:31.5px;height:31.5px;"><use href="#i-redo"/></svg>
<svg class="i" style="left:317px;top:70px;width:30.5px;height:31.5px;"><use href="#i-copy"/></svg>
<svg class="i" style="left:363px;top:69px;width:31.5px;height:30.5px;"><use href="#i-delete"/></svg>
<svg class="i" style="left:418px;top:69.5px;width:30.5px;height:32px;"><use href="#i-select"/></svg>
<svg class="i" style="left:469px;top:70px;width:30px;height:31px;"><use href="#i-moverot"/></svg>
<svg class="i" style="left:515.5px;top:70px;width:30px;height:31px;"><use href="#i-move"/></svg>
<svg class="i" style="left:562px;top:70px;width:32px;height:32px;"><use href="#i-rotate"/></svg>
<svg class="i" style="left:609px;top:70.5px;width:30px;height:30.5px;"><use href="#i-scale"/></svg>
<svg class="i" style="left:648.5px;top:70px;width:31px;height:31px;"><use href="#i-local"/></svg>
<svg class="i" style="left:700px;top:70px;width:28.5px;height:32px;"><use href="#i-play"/></svg>
<svg class="i" style="left:742.5px;top:70px;width:28.5px;height:32px;"><use href="#i-play"/></svg>
<svg class="i" style="left:792px;top:70px;width:28.5px;height:32px;"><use href="#i-playg"/></svg>
<svg class="i" style="left:853.5px;top:70px;width:32px;height:31px;"><use href="#i-settings"/></svg>
<svg class="i" style="left:914px;top:69.5px;width:32px;height:31px;"><use href="#i-store"/></svg>
<svg class="i" style="left:962.5px;top:70px;width:31px;height:31px;"><use href="#i-addons"/></svg>
<svg class="i" style="left:1028px;top:69.5px;width:31.5px;height:31.5px;"><use href="#i-manual"/></svg>
<svg class="i" style="left:1077.5px;top:70px;width:31px;height:30px;"><use href="#i-tips"/></svg>
<span class="t" style="left:7.00px;top:111.60px;font-size:15px;line-height:15px;color:#262626;">New</span>
<span class="t" style="left:45.50px;top:111.60px;font-size:15px;line-height:15px;color:#262626;transform:scaleX(1.0537);">Import</span>
<span class="t" style="left:107.30px;top:111.60px;font-size:15px;line-height:15px;color:#262626;transform:scaleX(0.8888);">Save</span>
<span class="t" style="left:146.50px;top:111.60px;font-size:15px;line-height:15px;color:#262626;transform:scaleX(0.8771);">Save</span>
<span class="t" style="left:153.30px;top:127.60px;font-size:15px;line-height:15px;color:#262626;transform:scaleX(0.8963);">As</span>
<span class="t" style="left:185.50px;top:111.60px;font-size:15px;line-height:15px;color:#b3b3b3;transform:scaleX(0.8830);">Save</span>
<span class="t" style="left:192.30px;top:127.60px;font-size:15px;line-height:15px;color:#b3b3b3;transform:scaleX(1.0197);">All</span>
<span class="t" style="left:232.50px;top:111.60px;font-size:15px;line-height:15px;color:#b3b3b3;transform:scaleX(0.9760);">Undo</span>
<span class="t" style="left:275.30px;top:111.60px;font-size:15px;line-height:15px;color:#b3b3b3;transform:scaleX(0.9537);">Redo</span>
<span class="t" style="left:316.30px;top:111.60px;font-size:15px;line-height:15px;color:#b3b3b3;transform:scaleX(0.9620);">Copy</span>
<span class="t" style="left:357.50px;top:111.60px;font-size:15px;line-height:15px;color:#b3b3b3;transform:scaleX(0.9917);">Delete</span>
<span class="t" style="left:416.30px;top:111.60px;font-size:15px;line-height:15px;color:#b3b3b3;transform:scaleX(0.9472);">Select</span>
<span class="t" style="left:465.00px;top:111.60px;font-size:15px;line-height:15px;color:#b3b3b3;">Move</span>
<span class="t" style="left:462.50px;top:127.60px;font-size:15px;line-height:15px;color:#b3b3b3;transform:scaleX(0.9796);">Rotate</span>
<span class="t" style="left:512.50px;top:111.60px;font-size:15px;line-height:15px;color:#b3b3b3;transform:scaleX(0.9758);">Move</span>
<span class="t" style="left:556.70px;top:111.60px;font-size:15px;line-height:15px;color:#b3b3b3;transform:scaleX(0.9683);">Rotate</span>
<span class="t" style="left:606.70px;top:111.60px;font-size:15px;line-height:15px;color:#b3b3b3;transform:scaleX(0.9006);">Scale</span>
<span class="t" style="left:647.50px;top:111.60px;font-size:15px;line-height:15px;color:#b3b3b3;transform:scaleX(0.9537);">Local</span>
<span class="t" style="left:700.30px;top:111.60px;font-size:15px;line-height:15px;color:#262626;transform:scaleX(0.9045);">Play</span>
<span class="t" style="left:743.30px;top:111.60px;font-size:15px;line-height:15px;color:#262626;transform:scaleX(0.8790);">Run</span>
<span class="t" style="left:736.70px;top:127.60px;font-size:15px;line-height:15px;color:#262626;transform:scaleX(0.9193);">Player</span>
<span class="t" style="left:792.50px;top:111.60px;font-size:15px;line-height:15px;color:#b3b3b3;transform:scaleX(0.8790);">Run</span>
<span class="t" style="left:784.20px;top:127.60px;font-size:15px;line-height:15px;color:#b3b3b3;transform:scaleX(0.9442);">Device</span>
<span class="t" style="left:843.30px;top:111.60px;font-size:15px;line-height:15px;color:#262626;transform:scaleX(0.9686);">Settings</span>
<span class="t" style="left:912.50px;top:111.60px;font-size:15px;line-height:15px;color:#262626;transform:scaleX(0.9398);">Store</span>
<span class="t" style="left:953.30px;top:111.60px;font-size:15px;line-height:15px;color:#262626;transform:scaleX(0.9966);">Addons</span>
<span class="t" style="left:1020.30px;top:111.60px;font-size:15px;line-height:15px;color:#262626;transform:scaleX(0.9755);">Manual</span>
<span class="t" style="left:1079.00px;top:111.60px;font-size:15px;line-height:15px;color:#262626;transform:scaleX(0.9719);">Tips</span>
<span class="t" style="left:16.50px;top:149.80px;font-size:15px;line-height:15px;color:#5b5b5b;transform:scaleX(0.9221);">Resource</span>
<span class="t" style="left:145.50px;top:149.80px;font-size:15px;line-height:15px;color:#5b5b5b;transform:scaleX(0.8830);">Save</span>
<span class="t" style="left:292.50px;top:149.80px;font-size:15px;line-height:15px;color:#5b5b5b;transform:scaleX(1.0071);">Editing</span>
<span class="t" style="left:513.70px;top:149.80px;font-size:15px;line-height:15px;color:#5b5b5b;transform:scaleX(0.9528);">Transform</span>
<span class="t" style="left:748.30px;top:149.80px;font-size:15px;line-height:15px;color:#5b5b5b;transform:scaleX(0.9148);">Play</span>
<span class="t" style="left:845.50px;top:149.80px;font-size:15px;line-height:15px;color:#5b5b5b;transform:scaleX(0.9703);">Project</span>
<span class="t" style="left:925.80px;top:149.80px;font-size:15px;line-height:15px;color:#5b5b5b;transform:scaleX(1.0240);">Additions</span>
<span class="t" style="left:1047.50px;top:149.80px;font-size:15px;line-height:15px;color:#5b5b5b;transform:scaleX(0.9506);">Docs</span>
<div style="left:5px;top:175px;width:362px;height:673px;background:#f0f0f0;border:1px solid #d3d3d3;box-sizing:border-box;"></div>
<div style="left:6px;top:200px;width:360px;height:1px;background:#d3d3d3;"></div>
<div style="left:6px;top:229px;width:360px;height:1px;background:#d3d3d3;"></div>
<svg class="i" style="left:313.5px;top:179.2px;width:52px;height:16px" viewBox="0 0 52 16"><path d="M1 6h7.500L4.750 9.800z" fill="#222"/><path d="M21.500 2h4.500M22.300 2v6M25.200 2v6M20.300 8.300h7M23.750 8.300v4.500" stroke="#222" stroke-width="1.200" fill="none"/><path d="M24.500 2.500v5.500h.9V2.500z" fill="#222"/><path d="M37.300 3.800l8 8m0-8l-8 8" stroke="#222" stroke-width="1.800" fill="none"/></svg>
<span class="t" style="left:12.00px;top:180.90px;font-size:15px;line-height:15px;color:#444;transform:scaleX(0.9205);">Resources</span>
<svg class="i" style="left:11px;top:207px;width:16px;height:16px;"><use href="#i-tools16"/></svg>
<svg class="i" style="left:35.5px;top:207px;width:16.5px;height:16.5px;"><use href="#i-shapes"/></svg>
<svg class="i" style="left:58px;top:213.800px;width:5.500px;height:3px" viewBox="0 0 7 4"><path d="M0 0h7L3.500 4z" fill="#333"/></svg>
<div style="left:70px;top:204px;width:1px;height:22px;background:#cfcfcf;"></div>
<svg class="i" style="left:77px;top:207px;width:16px;height:16px;"><use href="#i-edit"/></svg>
<div style="left:101px;top:204px;width:1px;height:22px;background:#cfcfcf;"></div>
<svg class="i" style="left:107.5px;top:207px;width:16px;height:16px;"><use href="#i-newfolder"/></svg>
<svg class="i" style="left:133px;top:207px;width:16px;height:16px;"><use href="#i-newfile"/></svg>
<svg class="i" style="left:158.5px;top:207.5px;width:15px;height:15px;"><use href="#i-redx"/></svg>
<svg class="i" style="left:183.5px;top:207px;width:15px;height:15px;"><use href="#i-rename"/></svg>
<svg class="i" style="left:208px;top:207px;width:15.5px;height:15.5px;"><use href="#i-cut"/></svg>
<svg class="i" style="left:233.5px;top:207px;width:15px;height:15px;"><use href="#i-copy16"/></svg>
<svg class="i" style="left:257.5px;top:207px;width:15.5px;height:15.5px;"><use href="#i-paste"/></svg>
<div style="left:6px;top:230px;width:339px;height:370px;background:#fff;"></div>
<div style="left:6px;top:524px;width:339px;height:21px;background:#f0f0f0;"></div>
<div style="left:345px;top:230px;width:21px;height:370px;background:#f0f0f0;"></div>
<div style="left:346px;top:432px;width:18.5px;height:120.5px;background:#cdcdcd;"></div>
<svg class="i" style="left:350px;top:236.5px;width:11px;height:7px" viewBox="0 0 11 7"><path d="M1 6l4.500-4.500L10 6" stroke="#505050" stroke-width="1.600" fill="none"/></svg>
<svg class="i" style="left:350px;top:586.5px;width:11px;height:7px" viewBox="0 0 11 7"><path d="M1 1l4.500 4.500L10 1" stroke="#505050" stroke-width="1.600" fill="none"/></svg>
<svg class="i" style="left:51px;top:236px;width:9px;height:9px" viewBox="0 0 9 9"><rect x=".5" y=".5" width="8" height="8" fill="#fff" stroke="#8c8c8c"/><path d="M2 4.500h5M4.500 2v5" stroke="#222" stroke-width="1" fill="none"/></svg>
<svg class="i" style="left:67px;top:232px;width:15.5px;height:15.5px;"><use href="#i-folder"/></svg>
<span class="t s" style="left:89.00px;top:234.00px;font-size:13px;line-height:13px;color:#000;transform:scaleX(0.9688);">Fonts</span>
<svg class="i" style="left:51px;top:257px;width:9px;height:9px" viewBox="0 0 9 9"><rect x=".5" y=".5" width="8" height="8" fill="#fff" stroke="#8c8c8c"/><path d="M2 4.500h5M4.500 2v5" stroke="#222" stroke-width="1" fill="none"/></svg>
<svg class="i" style="left:67px;top:253px;width:15.5px;height:15.5px;"><use href="#i-folder"/></svg>
<span class="t s" style="left:89.00px;top:255.00px;font-size:13px;line-height:13px;color:#000;transform:scaleX(0.9967);">Images</span>
<svg class="i" style="left:51px;top:278px;width:9px;height:9px" viewBox="0 0 9 9"><rect x=".5" y=".5" width="8" height="8" fill="#fff" stroke="#8c8c8c"/><path d="M2 4.500h5M4.500 2v5" stroke="#222" stroke-width="1" fill="none"/></svg>
<svg class="i" style="left:67px;top:274px;width:15.5px;height:15.5px;"><use href="#i-folder"/></svg>
<span class="t s" style="left:89.00px;top:276.00px;font-size:13px;line-height:13px;color:#000;transform:scaleX(1.0026);">Material templates</span>
<svg class="i" style="left:51px;top:299px;width:9px;height:9px" viewBox="0 0 9 9"><rect x=".5" y=".5" width="8" height="8" fill="#fff" stroke="#8c8c8c"/><path d="M2 4.500h5M4.500 2v5" stroke="#222" stroke-width="1" fill="none"/></svg>
<svg class="i" style="left:67px;top:295px;width:15.5px;height:15.5px;"><use href="#i-folder"/></svg>
<span class="t s" style="left:89.00px;top:297.00px;font-size:13px;line-height:13px;color:#000;transform:scaleX(0.9953);">Materials</span>
<svg class="i" style="left:51px;top:320px;width:9px;height:9px" viewBox="0 0 9 9"><rect x=".5" y=".5" width="8" height="8" fill="#fff" stroke="#8c8c8c"/><path d="M2 4.500h5M4.500 2v5" stroke="#222" stroke-width="1" fill="none"/></svg>
<svg class="i" style="left:67px;top:316px;width:15.5px;height:15.5px;"><use href="#i-folder"/></svg>
<span class="t s" style="left:89.00px;top:318.00px;font-size:13px;line-height:13px;color:#000;transform:scaleX(0.9661);">Models</span>
<svg class="i" style="left:51px;top:341px;width:9px;height:9px" viewBox="0 0 9 9"><rect x=".5" y=".5" width="8" height="8" fill="#fff" stroke="#8c8c8c"/><path d="M2 4.500h5M4.500 2v5" stroke="#222" stroke-width="1" fill="none"/></svg>
<svg class="i" style="left:67px;top:337px;width:15.5px;height:15.5px;"><use href="#i-folder"/></svg>
<span class="t s" style="left:89.00px;top:339.00px;font-size:13px;line-height:13px;color:#000;transform:scaleX(0.9941);">Scripts</span>
<svg class="i" style="left:51px;top:362px;width:9px;height:9px" viewBox="0 0 9 9"><rect x=".5" y=".5" width="8" height="8" fill="#fff" stroke="#8c8c8c"/><path d="M2 4.500h5M4.500 2v5" stroke="#222" stroke-width="1" fill="none"/></svg>
<svg class="i" style="left:67px;top:358px;width:15.5px;height:15.5px;"><use href="#i-folder"/></svg>
<span class="t s" style="left:89.00px;top:360.00px;font-size:13px;line-height:13px;color:#000;transform:scaleX(0.9810);">Shaders</span>
<svg class="i" style="left:51px;top:383px;width:9px;height:9px" viewBox="0 0 9 9"><rect x=".5" y=".5" width="8" height="8" fill="#fff" stroke="#8c8c8c"/><path d="M2 4.500h5M4.500 2v5" stroke="#222" stroke-width="1" fill="none"/></svg>
<svg class="i" style="left:67px;top:379px;width:15.5px;height:15.5px;"><use href="#i-folder"/></svg>
<span class="t s" style="left:89.00px;top:381.00px;font-size:13px;line-height:13px;color:#000;">Sprites</span>
<svg class="i" style="left:51px;top:404px;width:9px;height:9px" viewBox="0 0 9 9"><rect x=".5" y=".5" width="8" height="8" fill="#fff" stroke="#8c8c8c"/><path d="M2 4.500h5M4.500 2v5" stroke="#222" stroke-width="1" fill="none"/></svg>
<svg class="i" style="left:67px;top:400px;width:15.5px;height:15.5px;"><use href="#i-folder"/></svg>
<span class="t s" style="left:89.00px;top:402.00px;font-size:13px;line-height:13px;color:#000;transform:scaleX(0.9842);">Surfaces</span>
<svg class="i" style="left:51px;top:425px;width:9px;height:9px" viewBox="0 0 9 9"><rect x=".5" y=".5" width="8" height="8" fill="#fff" stroke="#8c8c8c"/><path d="M2 4.500h5M4.500 2v5" stroke="#222" stroke-width="1" fill="none"/></svg>
<svg class="i" style="left:67px;top:421px;width:15.5px;height:15.5px;"><use href="#i-folder"/></svg>
<span class="t s" style="left:89.00px;top:423.00px;font-size:13px;line-height:13px;color:#000;transform:scaleX(1.0376);">Tools</span>
<svg class="i" style="left:51px;top:446px;width:9px;height:9px" viewBox="0 0 9 9"><rect x=".5" y=".5" width="8" height="8" fill="#fff" stroke="#8c8c8c"/><path d="M2 4.500h5M4.500 2v5" stroke="#222" stroke-width="1" fill="none"/></svg>
<svg class="i" style="left:67px;top:442px;width:15.5px;height:15.5px;"><use href="#i-folder"/></svg>
<span class="t s" style="left:89.00px;top:444.00px;font-size:13px;line-height:13px;color:#000;">UI</span>
<svg class="i" style="left:51px;top:467px;width:9px;height:9px" viewBox="0 0 9 9"><rect x=".5" y=".5" width="8" height="8" fill="#fff" stroke="#8c8c8c"/><path d="M2 4.500h5" stroke="#222" stroke-width="1" fill="none"/></svg>
<svg class="i" style="left:67px;top:463px;width:15.5px;height:15.5px;"><use href="#i-folder"/></svg>
<span class="t s" style="left:89.00px;top:465.00px;font-size:13px;line-height:13px;color:#000;transform:scaleX(0.9802);">WindowApp</span>
<svg class="i" style="left:85.5px;top:484px;width:15.5px;height:15.5px;"><use href="#i-file"/></svg>
<span class="t s" style="left:108.00px;top:486.00px;font-size:13px;line-height:13px;color:#000;transform:scaleX(0.9876);">How_to_make_window_app.txt</span>
<span class="t s" style="left:86.00px;top:507.00px;font-size:13px;line-height:13px;color:#3f7dbf;font-weight:700;transform:scaleX(0.9323);">C#</span>
<span class="t s" style="left:108.00px;top:507.00px;font-size:13px;line-height:13px;color:#000;transform:scaleX(0.9772);">WindowAppMainForm.cs</span>
<svg class="i" style="left:70px;top:530px;width:9px;height:9px" viewBox="0 0 9 9"><rect x=".5" y=".5" width="8" height="8" fill="#fff" stroke="#8c8c8c"/><path d="M2 4.500h5M4.500 2v5" stroke="#222" stroke-width="1" fill="none"/></svg>
<svg class="i" style="left:85.5px;top:526px;width:16.5px;height:15.5px;"><use href="#i-uiicon"/></svg>
<span class="t s" style="left:108.00px;top:528.00px;font-size:13px;line-height:13px;color:#000;transform:scaleX(0.9816);">WindowAppMainForm.ui</span>
<svg class="i" style="left:51px;top:551px;width:9px;height:9px" viewBox="0 0 9 9"><rect x=".5" y=".5" width="8" height="8" fill="#fff" stroke="#8c8c8c"/><path d="M2 4.500h5M4.500 2v5" stroke="#222" stroke-width="1" fill="none"/></svg>
<svg class="i" style="left:67px;top:547px;width:15.5px;height:15.5px;"><use href="#i-file"/></svg>
<span class="t s" style="left:89.00px;top:549.00px;font-size:13px;line-height:13px;color:#000;transform:scaleX(0.9847);">ProjectSettings.component</span>
<svg class="i" style="left:32px;top:572px;width:9px;height:9px" viewBox="0 0 9 9"><rect x=".5" y=".5" width="8" height="8" fill="#fff" stroke="#8c8c8c"/><path d="M2 4.500h5M4.500 2v5" stroke="#222" stroke-width="1" fill="none"/></svg>
<svg class="i" style="left:48px;top:568px;width:15.5px;height:15.5px;"><use href="#i-folder"/></svg>
<span class="t s" style="left:70.00px;top:570.00px;font-size:13px;line-height:13px;color:#000;transform:scaleX(0.9704);">Content</span>
<div style="left:6px;top:586px;width:339px;height:13.500px;overflow:hidden">
<svg class="i" style="left:26px;top:7px;width:9px;height:9px" viewBox="0 0 9 9"><rect x=".5" y=".5" width="8" height="8" fill="#fff" stroke="#8c8c8c"/><path d="M2 4.500h5M4.500 2v5" stroke="#222" stroke-width="1" fill="none"/></svg>
<svg class="i" style="left:42px;top:3px;width:15.5px;height:15.5px;"><use href="#i-folder"/></svg>
<span class="t s" style="left:64.00px;top:5.00px;font-size:13px;line-height:13px;color:#000;transform:scaleX(1.0314);">Import</span>
</div>
<div style="left:6px;top:599.5px;width:360px;height:5px;background:#f0f0f0;"></div>
<div style="left:6px;top:604px;width:360px;height:1px;background:#d3d3d3;"></div>
<div style="left:6px;top:633px;width:360px;height:1px;background:#d3d3d3;"></div>
<svg class="i" style="left:11.5px;top:610.5px;width:14px;height:15px;"><use href="#i-uparrow"/></svg>
<span class="t" style="left:36.00px;top:611.45px;font-size:14px;line-height:14px;color:#555;transform:scaleX(0.9974);">Root</span>
<span class="t" style="left:87.00px;top:611.45px;font-size:14px;line-height:14px;color:#555;transform:scaleX(0.9639);">Assets</span>
<span class="t" style="left:150.00px;top:611.45px;font-size:14px;line-height:14px;color:#555;transform:scaleX(0.9774);">Base</span>
<span class="t" style="left:203.70px;top:611.45px;font-size:14px;line-height:14px;color:#555;transform:scaleX(0.9772);">WindowApp</span>
<svg class="i" style="left:75px;top:616.500px;width:4px;height:6px" viewBox="0 0 4 6"><path d="M0 0l3.500 3L0 6z" fill="#666"/></svg>
<svg class="i" style="left:138px;top:616.500px;width:4px;height:6px" viewBox="0 0 4 6"><path d="M0 0l3.500 3L0 6z" fill="#666"/></svg>
<svg class="i" style="left:192px;top:616.500px;width:4px;height:6px" viewBox="0 0 4 6"><path d="M0 0l3.500 3L0 6z" fill="#666"/></svg>
<div style="left:6px;top:634px;width:339px;height:213px;background:#fff;"></div>
<div style="left:345px;top:634px;width:21px;height:213px;background:#f0f0f0;"></div>
<div style="left:346px;top:654px;width:18.5px;height:110px;background:#cdcdcd;"></div>
<svg class="i" style="left:350px;top:640.5px;width:11px;height:7px" viewBox="0 0 11 7"><path d="M1 6l4.500-4.500L10 6" stroke="#505050" stroke-width="1.600" fill="none"/></svg>
<svg class="i" style="left:350px;top:834.5px;width:11px;height:7px" viewBox="0 0 11 7"><path d="M1 1l4.500 4.500L10 1" stroke="#505050" stroke-width="1.600" fill="none"/></svg>
<div style="left:6px;top:634px;width:339px;height:213px;overflow:hidden">
<svg class="i" style="left:20px;top:7.5px;width:36px;height:38px;"><use href="#i-comp"/></svg>
<span class="t s" style="left:7.50px;top:54.00px;font-size:13px;line-height:13px;color:#1a1a1a;transform:scaleX(0.9543);">Button Exit</span>
<span class="t s" style="left:9.25px;top:69.80px;font-size:13px;line-height:13px;color:#1a1a1a;transform:scaleX(0.9653);">- UIButton</span>
<svg class="i" style="left:97px;top:7.5px;width:36px;height:38px;"><use href="#i-comp"/></svg>
<span class="t s" style="left:94.00px;top:54.00px;font-size:13px;line-height:13px;color:#1a1a1a;transform:scaleX(0.9615);">Render</span>
<span class="t s" style="left:83.25px;top:69.80px;font-size:13px;line-height:13px;color:#1a1a1a;transform:scaleX(1.0678);">Target - ...</span>
<svg class="i" style="left:174px;top:7.5px;width:36px;height:38px;"><use href="#i-comp"/></svg>
<span class="t s" style="left:167.50px;top:54.00px;font-size:13px;line-height:13px;color:#1a1a1a;transform:scaleX(0.9627);">Combo -</span>
<span class="t s" style="left:165.75px;top:69.80px;font-size:13px;line-height:13px;color:#1a1a1a;transform:scaleX(0.9377);">UICombo</span>
<svg class="i" style="left:251px;top:7.5px;width:36px;height:38px;"><use href="#i-comp"/></svg>
<span class="t s" style="left:251.75px;top:54.00px;font-size:13px;line-height:13px;color:#1a1a1a;transform:scaleX(1.0536);">Text -</span>
<span class="t s" style="left:250.25px;top:69.80px;font-size:13px;line-height:13px;color:#1a1a1a;transform:scaleX(0.9907);">UIText</span>
<svg class="i" style="left:20px;top:97.5px;width:36px;height:38px;"><use href="#i-comp"/></svg>
<span class="t s" style="left:16.25px;top:144.00px;font-size:13px;line-height:13px;color:#1a1a1a;transform:scaleX(0.9487);">Check -</span>
<span class="t s" style="left:14.50px;top:159.80px;font-size:13px;line-height:13px;color:#1a1a1a;transform:scaleX(0.9226);">UICheck</span>
<svg class="i" style="left:97px;top:97.5px;width:36px;height:38px;"><use href="#i-comp"/></svg>
<span class="t s" style="left:93.75px;top:144.00px;font-size:13px;line-height:13px;color:#1a1a1a;transform:scaleX(1.0076);">Slider -</span>
<span class="t s" style="left:92.25px;top:159.80px;font-size:13px;line-height:13px;color:#1a1a1a;transform:scaleX(0.9622);">UISlider</span>
<svg class="i" style="left:174px;top:97.5px;width:36px;height:38px;"><use href="#i-comp"/></svg>
<span class="t s" style="left:160.00px;top:144.00px;font-size:13px;line-height:13px;color:#1a1a1a;transform:scaleX(0.9690);">List - UIList</span>
<svg class="i" style="left:251px;top:97.5px;width:36px;height:38px;"><use href="#i-comp"/></svg>
<span class="t s" style="left:253.75px;top:144.00px;font-size:13px;line-height:13px;color:#1a1a1a;transform:scaleX(0.9722);">Edit -</span>
<span class="t s" style="left:252.25px;top:159.80px;font-size:13px;line-height:13px;color:#1a1a1a;transform:scaleX(0.9179);">UIEdit</span>
<svg class="i" style="left:20px;top:187.5px;width:36px;height:38px;"><use href="#i-comp"/></svg>
<svg class="i" style="left:97px;top:187.5px;width:36px;height:38px;"><use href="#i-comp"/></svg>
<svg class="i" style="left:174px;top:187.5px;width:36px;height:38px;"><use href="#i-comp"/></svg>
<svg class="i" style="left:251px;top:187.5px;width:36px;height:38px;"><use href="#i-comp"/></svg>
</div>
<div style="left:5px;top:853px;width:362px;height:193px;background:#f0f0f0;border:1px solid #d3d3d3;box-sizing:border-box;"></div>
<div style="left:6px;top:878px;width:360px;height:1px;background:#d3d3d3;"></div>
<svg class="i" style="left:313.5px;top:857.7px;width:52px;height:16px" viewBox="0 0 52 16"><path d="M1 6h7.500L4.750 9.800z" fill="#222"/><path d="M21.500 2h4.500M22.300 2v6M25.200 2v6M20.300 8.300h7M23.750 8.300v4.500" stroke="#222" stroke-width="1.200" fill="none"/><path d="M24.500 2.500v5.500h.9V2.500z" fill="#222"/><path d="M37.300 3.800l8 8m0-8l-8 8" stroke="#222" stroke-width="1.800" fill="none"/></svg>
<span class="t" style="left:12.00px;top:859.40px;font-size:15px;line-height:15px;color:#444;transform:scaleX(0.9558);">Preview</span>
<div style="left:8px;top:1051px;width:244px;height:24.5px;background:#fff;"></div>
<span class="t" style="left:14.00px;top:1056.00px;font-size:15px;line-height:15px;color:#444;transform:scaleX(0.9604);">Message Log</span>
<span class="t" style="left:113.00px;top:1056.00px;font-size:15px;line-height:15px;color:#444;transform:scaleX(1.0149);">Output</span>
<span class="t" style="left:171.00px;top:1056.00px;font-size:15px;line-height:15px;color:#444;transform:scaleX(1.0151);">Debug Info</span>
<div style="left:482px;top:176px;width:206px;height:27.5px;background:#fff;border:1px solid #d9d9d9;box-sizing:border-box;border-bottom:none;"></div>
<span class="t" style="left:380.00px;top:182.60px;font-size:15px;line-height:15px;color:#3b3b3b;transform:scaleX(0.9409);">Start Page</span>
<svg class="i" style="left:461px;top:185px;width:10px;height:10px" viewBox="0 0 10 10"><path d="M1 1l8 8m0-8l-8 8" stroke="#222" stroke-width="1.700" fill="none"/></svg>
<span class="t" style="left:490.70px;top:182.60px;font-size:15px;line-height:15px;color:#1e1e1e;">WindowAppMainForm.ui</span>
<svg class="i" style="left:668.5px;top:185px;width:10px;height:10px" viewBox="0 0 10 10"><path d="M1 1l8 8m0-8l-8 8" stroke="#222" stroke-width="1.700" fill="none"/></svg>
<span class="t" style="left:698.30px;top:182.60px;font-size:15px;line-height:15px;color:#3b3b3b;transform:scaleX(0.9939);">WindowAppMainForm.cs</span>
<svg class="i" style="left:877.5px;top:185px;width:10px;height:10px" viewBox="0 0 10 10"><path d="M1 1l8 8m0-8l-8 8" stroke="#222" stroke-width="1.700" fill="none"/></svg>
<span class="t" style="left:907.30px;top:182.60px;font-size:15px;line-height:15px;color:#3b3b3b;transform:scaleX(0.9763);">How_to_make_window_app.txt</span>
<svg class="i" style="left:1123px;top:185px;width:10px;height:10px" viewBox="0 0 10 10"><path d="M1 1l8 8m0-8l-8 8" stroke="#222" stroke-width="1.700" fill="none"/></svg>
<svg class="i" style="left:1526px;top:184px;width:12px;height:10px" viewBox="0 0 12 10"><path d="M.5 .5h11v2H.5zM.5 4.500h11L6 10z" fill="#333"/></svg>
<svg class="i" style="left:373px;top:203px;width:1174px;height:842px;background:#2b2b2b" viewBox="373 203 1174 842" shape-rendering="crispEdges"><path d="M384.5 203V1045M401.5 203V1045M418.5 203V1045M435.5 203V1045M469.5 203V1045M486.5 203V1045M503.5 203V1045M520.5 203V1045M537.5 203V1045M554.5 203V1045M571.5 203V1045M588.5 203V1045M605.5 203V1045M639.5 203V1045M656.5 203V1045M673.5 203V1045M690.5 203V1045M707.5 203V1045M724.5 203V1045M741.5 203V1045M758.5 203V1045M775.5 203V1045M809.5 203V1045M826.5 203V1045M843.5 203V1045M860.5 203V1045M877.5 203V1045M894.5 203V1045M911.5 203V1045M928.5 203V1045M945.5 203V1045M979.5 203V1045M996.5 203V1045M1013.5 203V1045M1030.5 203V1045M1047.5 203V1045M1064.5 203V1045M1081.5 203V1045M1098.5 203V1045M1115.5 203V1045M1149.5 203V1045M1166.5 203V1045M1183.5 203V1045M1200.5 203V1045M1217.5 203V1045M1234.5 203V1045M1251.5 203V1045M1268.5 203V1045M1285.5 203V1045M1319.5 203V1045M1336.5 203V1045M1353.5 203V1045M1370.5 203V1045M1387.5 203V1045M1404.5 203V1045M1421.5 203V1045M1438.5 203V1045M1455.5 203V1045M1489.5 203V1045M1506.5 203V1045M1523.5 203V1045M1540.5 203V1045M373 210.5H1547M373 227.5H1547M373 244.5H1547M373 261.5H1547M373 295.5H1547M373 312.5H1547M373 329.5H1547M373 346.5H1547M373 363.5H1547M373 380.5H1547M373 397.5H1547M373 414.5H1547M373 431.5H1547M373 465.5H1547M373 482.5H1547M373 499.5H1547M373 516.5H1547M373 533.5H1547M373 550.5H1547M373 567.5H1547M373 584.5H1547M373 601.5H1547M373 635.5H1547M373 652.5H1547M373 669.5H1547M373 686.5H1547M373 703.5H1547M373 720.5H1547M373 737.5H1547M373 754.5H1547M373 771.5H1547M373 805.5H1547M373 822.5H1547M373 839.5H1547M373 856.5H1547M373 873.5H1547M373 890.5H1547M373 907.5H1547M373 924.5H1547M373 941.5H1547M373 975.5H1547M373 992.5H1547M373 1009.5H1547M373 1026.5H1547M373 1043.5H1547" stroke="#353535" stroke-width="1" fill="none"/><path d="M452.5 203V1045M622.5 203V1045M792.5 203V1045M962.5 203V1045M1132.5 203V1045M1302.5 203V1045M1472.5 203V1045M373 278.5H1547M373 448.5H1547M373 618.5H1547M373 788.5H1547M373 958.5H1547" stroke="#1b1b1b" stroke-width="1" fill="none"/><path d="M434.500 203V1045M1491.500 203V1045M373 321.500H1547M373 915.500H1547" stroke="#636363" stroke-width="1" fill="none"/></svg>
<div style="left:434px;top:321px;width:1057px;height:594.5px;background:#585858;"></div>
<div style="left:453px;top:340px;width:14.5px;height:14.5px;background:#000;border:1px solid #8a8a8a;box-sizing:border-box;"></div>
<span class="t s" style="left:471.70px;top:341.69px;font-size:11px;line-height:11px;color:#f2f2f2;transform:scaleX(1.0061);">Check box</span>
<div style="left:452.5px;top:370px;width:237.5px;height:23px;background:#000;border:1px solid #e6e6e6;box-sizing:border-box;"></div>
<span class="t s" style="left:456.00px;top:375.69px;font-size:11px;line-height:11px;color:#fff;transform:scaleX(0.9811);">Item 1</span>
<svg class="i" style="left:672.500px;top:376.500px;width:13px;height:11px" viewBox="0 0 13 11"><path d="M0 0h13L6.500 11z" fill="#fff"/></svg>
<div style="left:453px;top:410.5px;width:237px;height:18.5px;background:#5e5e5e;"></div>
<div style="left:483px;top:416px;width:2px;height:8px;background:#707070;"></div>
<div style="left:505px;top:416px;width:2px;height:8px;background:#707070;"></div>
<div style="left:526.7px;top:416px;width:2px;height:8px;background:#707070;"></div>
<div style="left:549px;top:416px;width:2px;height:8px;background:#707070;"></div>
<div style="left:570.7px;top:416px;width:2px;height:8px;background:#707070;"></div>
<div style="left:592.5px;top:416px;width:2px;height:8px;background:#707070;"></div>
<div style="left:614.3px;top:416px;width:2px;height:8px;background:#707070;"></div>
<div style="left:636.3px;top:416px;width:2px;height:8px;background:#707070;"></div>
<div style="left:658.3px;top:416px;width:2px;height:8px;background:#707070;"></div>
<div style="left:680.3px;top:416px;width:2px;height:8px;background:#707070;"></div>
<div style="left:459.5px;top:410.5px;width:5px;height:18.5px;background:#fff;"></div>
<div style="left:452.5px;top:453px;width:237.5px;height:59px;background:#000;border:1px solid #e6e6e6;box-sizing:border-box;"></div>
<div style="left:453.5px;top:454px;width:235.5px;height:13.7px;background:#0808c8;"></div>
<span class="t s" style="left:456.00px;top:454.69px;font-size:11px;line-height:11px;color:#fff;transform:scaleX(0.9811);">Item 1</span>
<span class="t s" style="left:456.00px;top:468.89px;font-size:11px;line-height:11px;color:#fff;transform:scaleX(0.9974);">Item 2</span>
<span class="t s" style="left:456.00px;top:482.99px;font-size:11px;line-height:11px;color:#fff;transform:scaleX(0.9974);">Item 3</span>
<div style="left:452.5px;top:530px;width:237.5px;height:23.5px;background:#000;border:1px solid #e6e6e6;box-sizing:border-box;"></div>
<span class="t s" style="left:456.00px;top:535.69px;font-size:11px;line-height:11px;color:#fff;transform:scaleX(1.0642);">Edit box</span>
<div style="left:453px;top:570.5px;width:237px;height:19px;background:linear-gradient(90deg,#606060,#5a5a5a);"></div>
<div style="left:453px;top:570.5px;width:18px;height:19px;background:#fff;"></div>
<svg class="i" style="left:452px;top:607px;width:240px;height:168px" viewBox="452 607 240 168" shape-rendering="crispEdges"><path d="M452.500 607.500H690.500V773.500H452.500ZM512.500 607.500V773.500M571.500 607.500V773.500M631.500 607.500V773.500M452.500 662.500H690.500M452.500 717.500H690.500" stroke="#858585" stroke-width="1" fill="none"/></svg>
<div style="left:515px;top:610px;width:54.5px;height:50px;background:#000;"></div>
<svg class="i" style="left:515px;top:610px;width:54.500px;height:50px" viewBox="0 0 54.500 50"><defs><radialGradient id="gBall" cx=".5" cy=".5" r=".5"><stop offset="0" stop-color="#fff"/><stop offset=".18" stop-color="#e2e2e2"/><stop offset=".5" stop-color="#989898"/><stop offset=".85" stop-color="#4c4c4c"/><stop offset="1" stop-color="#2e2e2e"/></radialGradient></defs><ellipse cx="27.200" cy="25" rx="24.500" ry="23" fill="url(#gBall)" stroke="#ededed" stroke-width="1.200"/></svg>
<div style="left:453px;top:791px;width:237px;height:24px;background:#100c50;"></div>
<div style="left:455px;top:794px;width:70px;height:18.7px;background:#fff;"></div>
<span class="t s" style="left:453.00px;top:834.69px;font-size:11px;line-height:11px;color:#f2f2f2;transform:scaleX(1.0316);">Text text text</span>
<div style="left:1353.7px;top:339.8px;width:119.3px;height:24px;background:#1c1c9a;"></div>
<span class="t s" style="left:1400.25px;top:347.09px;font-size:11px;line-height:11px;color:#fff;transform:scaleX(1.0133);">Close</span>
<div style="left:1353.7px;top:423px;width:119.3px;height:23.7px;background:#1c1c9a;"></div>
<span class="t s" style="left:1380.75px;top:431.29px;font-size:11px;line-height:11px;color:#fff;transform:scaleX(1.0127);">Message Box</span>
<svg class="i" style="left:832px;top:655px;width:374px;height:237px;overflow:hidden" viewBox="0 0 374 237"><defs>
<linearGradient id="wL" x1="0" y1="0" x2="1" y2="0"><stop offset="0" stop-color="#b68e63"/><stop offset=".5" stop-color="#9e7d5b"/><stop offset="1" stop-color="#765e49"/></linearGradient>
<linearGradient id="wR" x1="0" y1="0" x2="1" y2="0"><stop offset="0" stop-color="#675443"/><stop offset=".45" stop-color="#897056"/><stop offset="1" stop-color="#a88663"/></linearGradient>
<linearGradient id="fl" x1="0" y1="0" x2="0" y2="1"><stop offset="0" stop-color="#6a6253"/><stop offset=".33" stop-color="#7a7160"/><stop offset=".5" stop-color="#867b68"/><stop offset=".75" stop-color="#847966"/><stop offset="1" stop-color="#7a705f"/></linearGradient>
<radialGradient id="sh" cx=".5" cy=".5" r=".5"><stop offset="0" stop-color="#120e08" stop-opacity=".72"/><stop offset=".6" stop-color="#120e08" stop-opacity=".55"/><stop offset="1" stop-color="#120e08" stop-opacity="0"/></radialGradient>
<radialGradient id="sh2" cx=".5" cy=".5" r=".5"><stop offset="0" stop-color="#000" stop-opacity=".26"/><stop offset=".75" stop-color="#000" stop-opacity=".17"/><stop offset="1" stop-color="#000" stop-opacity="0"/></radialGradient>
<radialGradient id="robo" cx=".4" cy=".25" r=".85"><stop offset="0" stop-color="#2780bb"/><stop offset=".5" stop-color="#1b6297"/><stop offset="1" stop-color="#0e3353"/></radialGradient>
<linearGradient id="ring" x1="0" y1="0" x2="1" y2="1"><stop offset="0" stop-color="#828282"/><stop offset=".35" stop-color="#444"/><stop offset="1" stop-color="#181818"/></linearGradient>
<radialGradient id="lens" cx=".45" cy=".4" r=".6"><stop offset="0" stop-color="#2a86c4"/><stop offset="1" stop-color="#164f80"/></radialGradient>
<pattern id="brk" width="8" height="3.400" patternUnits="userSpaceOnUse"><path d="M0 .3H8M0 2H8M2 .3V2M6 2V3.700" stroke="#ecd8b8" stroke-width=".5" opacity=".7"/><rect x="2.500" y=".5" width="3" height="1.300" fill="#7a5a3a" opacity=".16"/><rect x="6.500" y="2.200" width="1.500" height="1.200" fill="#7a5a3a" opacity=".14"/></pattern>
<filter id="bl" x="-30%" y="-30%" width="160%" height="160%"><feGaussianBlur stdDeviation="1.300"/></filter>
<filter id="bl2" x="-30%" y="-30%" width="160%" height="160%"><feGaussianBlur stdDeviation=".5"/></filter>
<filter id="nz" x="0" y="0" width="100%" height="100%"><feTurbulence type="fractalNoise" baseFrequency=".85" numOctaves="2" seed="4"/><feColorMatrix values="0 0 0 0 0  0 0 0 0 0  0 0 0 0 0  .9 .9 .9 0 -1.050"/></filter>
<filter id="nz2" x="0" y="0" width="100%" height="100%"><feTurbulence type="fractalNoise" baseFrequency=".6" numOctaves="2" seed="9"/><feColorMatrix values="0 0 0 0 1  0 0 0 0 1  0 0 0 0 .9  .8 .8 .8 0 -.950"/></filter>
</defs><rect width="374" height="237" fill="url(#fl)"/><rect width="374" height="237" filter="url(#nz)" opacity=".22"/><rect width="374" height="237" filter="url(#nz2)" opacity=".13"/><path d="M0 131L196 77.500 374 117V123L196 83 0 139Z" fill="#2a261e" opacity=".22" filter="url(#bl)"/><path d="M0 0H196V77.500L0 131Z" fill="url(#wL)"/><path d="M0 0H196V77.500L0 131Z" fill="url(#brk)"/><path d="M196 0H374V117L196 77.500Z" fill="url(#wR)"/><path d="M196 0H374V117L196 77.500Z" fill="url(#brk)"/><path d="M0 0H374V117L196 77.500 0 131Z" filter="url(#nz)" opacity=".16"/><path d="M196 0V77.500" stroke="#6e5c4a" stroke-width="1.200" opacity=".8"/><ellipse cx="128" cy="124" rx="52" ry="15" fill="url(#sh2)"/><ellipse cx="112" cy="228" rx="52" ry="17" fill="url(#sh2)"/><ellipse cx="166" cy="125" rx="9" ry="12" fill="#14110c" opacity=".55" filter="url(#bl)"/><path d="M233 88L256 70 274 72 268 90 252 92Z" fill="#1c150e" opacity=".3" filter="url(#bl)"/><ellipse cx="275.500" cy="97.500" rx="7.500" ry="3.200" fill="#15110b" opacity=".75" filter="url(#bl2)"/><ellipse cx="42" cy="82" rx="17" ry="11" fill="url(#sh)" transform="rotate(20 42 82)"/><path d="M211 168c2-7 12-8 19-5l9 4 8 17-5 1-5-8 1 12-5 1-4-10-1 14-4-1-4-13c-5-2-10-6-9-12z" fill="#17130d" opacity=".74" filter="url(#bl2)"/><ellipse cx="188.300" cy="136" rx="20.500" ry="8.300" fill="#1b5f93"/><ellipse cx="188.300" cy="134" rx="20.500" ry="8.300" fill="#236fa6"/><ellipse cx="190.200" cy="139.300" rx="13.500" ry="5" fill="#2b2b2b"/><ellipse cx="190.200" cy="138.300" rx="13.500" ry="4.600" fill="#333"/><circle cx="188.300" cy="112" r="22" fill="url(#robo)"/><path d="M167 116C172 119 176 120 180 120M203 119C206 118 209 116 210 114" stroke="#0f3554" stroke-width=".8" fill="none"/><circle cx="190.900" cy="114.500" r="16.800" fill="url(#ring)"/><circle cx="190.900" cy="114.500" r="11.800" fill="#3a3a3a"/><circle cx="190.900" cy="114.500" r="9.700" fill="url(#lens)"/><circle cx="191.100" cy="114.500" r="3.800" fill="#020202"/><g filter="url(#bl2)"><path d="M11 52l7-2 5 1 3-3 9 2 7 5 3 7-2 6-6 2-9-2-3 2-7 1 5-4-6-1 4-3-6-2 5-3-6-2z" fill="#1a3384"/><path d="M24 50l10 2 8 6 2 7-4 4-8-1-8-6z" fill="#0d183f"/><path d="M33 55l6 2 3 5-3 5-6-2-2-5z" fill="#245a74"/><path d="M14 52l8 1M18 57l7 0M21 62l6-1" stroke="#3d63d6" stroke-width=".9"/></g><g filter="url(#bl2)"><path d="M311 64l5-6 8-4 4 2 4-3 5 1-3 5-4 1 2 5-3 4 4 2-3 2-6-1-4 2-6-3z" fill="#d8141c"/><path d="M313 61l5-3 5 2 1 6-4 4-6-2z" fill="#23313a"/><path d="M322 66l6 2-2 4-6 0z" fill="#5a0a0e"/><path d="M326 58l5 1-1 5-4-1z" fill="#5e0c10"/></g><g filter="url(#bl2)"><path d="M287 146l28 6-20 2 14 9-17-3 12 12-16-8 8 14-13-11 4 17-9-14-3 12-4-13z" fill="#1d1b17"/><path d="M257 148c0-8 7-13 16-13l12 2 10 6 3 8-4 9-9 6-10 1c-10-1-18-9-18-19z" fill="#6b5219"/><path d="M261 143l10-5 12 2 8 6-2 8-9 5-10-1-8-7z" fill="#94732a"/><path d="M266 139l20 11M261 147l22 10M273 136l17 9M262 155l15 7M270 162l10 3" stroke="#1f180a" stroke-width="1.700"/><path d="M289 161l6 2-2 5-6-2z" fill="#2a9ad4"/><path d="M271 166l13 7 5-3-11-6z" fill="#15130e"/></g><g font-family="Liberation Sans, sans-serif" font-size="5.200" filter="url(#bl2)"><text x="90.700" y="167.800" textLength="199" lengthAdjust="spacingAndGlyphs" fill="#14110c" opacity=".75">The animation made by configuring a reference of the Transform property of the object.</text><text x="90" y="167" textLength="199" lengthAdjust="spacingAndGlyphs" fill="#e8e4da" opacity=".7">The animation made by configuring a reference of the Transform property of the object.</text></g></svg>
<div style="left:1553px;top:175px;width:362px;height:286px;background:#f0f0f0;border:1px solid #d3d3d3;box-sizing:border-box;"></div>
<div style="left:1554px;top:200px;width:360px;height:1px;background:#d3d3d3;"></div>
<div style="left:1554px;top:229px;width:360px;height:1px;background:#d3d3d3;"></div>
<svg class="i" style="left:1861.5px;top:179.2px;width:52px;height:16px" viewBox="0 0 52 16"><path d="M1 6h7.500L4.750 9.800z" fill="#222"/><path d="M21.500 2h4.500M22.300 2v6M25.200 2v6M20.300 8.300h7M23.750 8.300v4.500" stroke="#222" stroke-width="1.200" fill="none"/><path d="M24.500 2.500v5.500h.9V2.500z" fill="#222"/><path d="M37.300 3.800l8 8m0-8l-8 8" stroke="#222" stroke-width="1.800" fill="none"/></svg>
<span class="t" style="left:1560.00px;top:180.90px;font-size:15px;line-height:15px;color:#444;transform:scaleX(0.9831);">Objects</span>
<svg class="i" style="left:1560px;top:207px;width:16px;height:16px;"><use href="#i-tools16"/></svg>
<svg class="i" style="left:1584px;top:207px;width:16px;height:16px;"><use href="#i-comp16"/></svg>
<div style="left:1608px;top:204px;width:1px;height:22px;background:#cfcfcf;"></div>
<svg class="i" style="left:1615.5px;top:207px;width:16px;height:16px;"><use href="#i-editg"/></svg>
<svg class="i" style="left:1641px;top:207px;width:16px;height:16px;"><use href="#i-windowsg"/></svg>
<div style="left:1665px;top:204px;width:1px;height:22px;background:#cfcfcf;"></div>
<svg class="i" style="left:1671px;top:207px;width:16px;height:16px;"><use href="#i-newfileg"/></svg>
<svg class="i" style="left:1697px;top:207.5px;width:15px;height:15px;"><use href="#i-grayx"/></svg>
<svg class="i" style="left:1721.5px;top:207px;width:15px;height:15px;"><use href="#i-renameg"/></svg>
<svg class="i" style="left:1747px;top:207px;width:15px;height:15px;"><use href="#i-copy16g"/></svg>
<svg class="i" style="left:1771px;top:207px;width:15px;height:15px;"><use href="#i-upg"/></svg>
<svg class="i" style="left:1796.5px;top:207px;width:15px;height:15px;"><use href="#i-downg"/></svg>
<svg class="i" style="left:1822px;top:207px;width:15px;height:15px;"><use href="#i-cutg"/></svg>
<svg class="i" style="left:1847px;top:207px;width:15px;height:15px;"><use href="#i-copy16g"/></svg>
<svg class="i" style="left:1871.5px;top:207px;width:15.5px;height:15.5px;opacity:.85;"><use href="#i-paste"/></svg>
<div style="left:1554px;top:230px;width:338px;height:230px;background:#fff;"></div>
<div style="left:1891px;top:230px;width:22px;height:230px;background:#f0f0f0;"></div>
<div style="left:1893px;top:250.5px;width:19.5px;height:113.5px;background:#cdcdcd;"></div>
<svg class="i" style="left:1897px;top:236.5px;width:11px;height:7px" viewBox="0 0 11 7"><path d="M1 6l4.500-4.500L10 6" stroke="#505050" stroke-width="1.600" fill="none"/></svg>
<svg class="i" style="left:1897px;top:447px;width:11px;height:7px" viewBox="0 0 11 7"><path d="M1 1l4.500 4.500L10 1" stroke="#505050" stroke-width="1.600" fill="none"/></svg>
<svg class="i" style="left:1561px;top:236px;width:9px;height:9px" viewBox="0 0 9 9"><rect x=".5" y=".5" width="8" height="8" fill="#fff" stroke="#8c8c8c"/><path d="M2 4.500h5" stroke="#222" stroke-width="1" fill="none"/></svg>
<svg class="i" style="left:1576.5px;top:231.5px;width:16px;height:16px;"><use href="#i-puzzle"/></svg>
<span class="t s" style="left:1598.60px;top:234.00px;font-size:13px;line-height:13px;color:#000;transform:scaleX(0.9915);">'Root' - WindowAppMainForm</span>
<svg class="i" style="left:1580px;top:257px;width:9px;height:9px" viewBox="0 0 9 9"><rect x=".5" y=".5" width="8" height="8" fill="#fff" stroke="#8c8c8c"/><path d="M2 4.500h5M4.500 2v5" stroke="#222" stroke-width="1" fill="none"/></svg>
<svg class="i" style="left:1595.5px;top:252.5px;width:16px;height:16px;"><use href="#i-puzzle"/></svg>
<span class="t s" style="left:1618.00px;top:255.00px;font-size:13px;line-height:13px;color:#000;transform:scaleX(0.9679);">Button Exit - UIButton</span>
<svg class="i" style="left:1595.5px;top:273.5px;width:16px;height:16px;"><use href="#i-puzzle"/></svg>
<span class="t s" style="left:1618.00px;top:276.00px;font-size:13px;line-height:13px;color:#000;transform:scaleX(1.0083);">Render Target - UIRenderTarget</span>
<svg class="i" style="left:1580px;top:299px;width:9px;height:9px" viewBox="0 0 9 9"><rect x=".5" y=".5" width="8" height="8" fill="#fff" stroke="#8c8c8c"/><path d="M2 4.500h5M4.500 2v5" stroke="#222" stroke-width="1" fill="none"/></svg>
<svg class="i" style="left:1595.5px;top:294.5px;width:16px;height:16px;"><use href="#i-puzzle"/></svg>
<span class="t s" style="left:1618.00px;top:297.00px;font-size:13px;line-height:13px;color:#000;transform:scaleX(0.9689);">Combo - UICombo</span>
<svg class="i" style="left:1595.5px;top:315.5px;width:16px;height:16px;"><use href="#i-puzzle"/></svg>
<span class="t s" style="left:1618.00px;top:318.00px;font-size:13px;line-height:13px;color:#000;transform:scaleX(1.0381);">Text - UIText</span>
<svg class="i" style="left:1595.5px;top:336.5px;width:16px;height:16px;"><use href="#i-puzzle"/></svg>
<span class="t s" style="left:1618.00px;top:339.00px;font-size:13px;line-height:13px;color:#000;transform:scaleX(0.9517);">Check - UICheck</span>
<svg class="i" style="left:1595.5px;top:357.5px;width:16px;height:16px;"><use href="#i-puzzle"/></svg>
<span class="t s" style="left:1618.00px;top:360.00px;font-size:13px;line-height:13px;color:#000;">Slider - UISlider</span>
<svg class="i" style="left:1580px;top:383px;width:9px;height:9px" viewBox="0 0 9 9"><rect x=".5" y=".5" width="8" height="8" fill="#fff" stroke="#8c8c8c"/><path d="M2 4.500h5M4.500 2v5" stroke="#222" stroke-width="1" fill="none"/></svg>
<svg class="i" style="left:1595.5px;top:378.5px;width:16px;height:16px;"><use href="#i-puzzle"/></svg>
<span class="t s" style="left:1618.00px;top:381.00px;font-size:13px;line-height:13px;color:#000;transform:scaleX(0.9690);">List - UIList</span>
<svg class="i" style="left:1580px;top:404px;width:9px;height:9px" viewBox="0 0 9 9"><rect x=".5" y=".5" width="8" height="8" fill="#fff" stroke="#8c8c8c"/><path d="M2 4.500h5M4.500 2v5" stroke="#222" stroke-width="1" fill="none"/></svg>
<svg class="i" style="left:1595.5px;top:399.5px;width:16px;height:16px;"><use href="#i-puzzle"/></svg>
<span class="t s" style="left:1618.00px;top:402.00px;font-size:13px;line-height:13px;color:#000;transform:scaleX(0.9660);">Edit - UIEdit</span>
<svg class="i" style="left:1595.5px;top:420.5px;width:16px;height:16px;"><use href="#i-puzzle"/></svg>
<span class="t s" style="left:1618.00px;top:423.00px;font-size:13px;line-height:13px;color:#000;transform:scaleX(0.9935);">Scroll - UIScroll</span>
<svg class="i" style="left:1580px;top:446px;width:9px;height:9px" viewBox="0 0 9 9"><rect x=".5" y=".5" width="8" height="8" fill="#fff" stroke="#8c8c8c"/><path d="M2 4.500h5M4.500 2v5" stroke="#222" stroke-width="1" fill="none"/></svg>
<svg class="i" style="left:1595.5px;top:441.5px;width:16px;height:16px;"><use href="#i-puzzle"/></svg>
<span class="t s" style="left:1618.00px;top:444.00px;font-size:13px;line-height:13px;color:#000;transform:scaleX(0.9637);">Grid - UIGrid</span>
<div style="left:1553px;top:466px;width:362px;height:580px;background:#f0f0f0;border:1px solid #d3d3d3;box-sizing:border-box;"></div>
<div style="left:1554px;top:491px;width:360px;height:1px;background:#d3d3d3;"></div>
<svg class="i" style="left:1861.5px;top:470.7px;width:52px;height:16px" viewBox="0 0 52 16"><path d="M1 6h7.500L4.750 9.800z" fill="#222"/><path d="M21.500 2h4.500M22.300 2v6M25.200 2v6M20.300 8.300h7M23.750 8.300v4.500" stroke="#222" stroke-width="1.200" fill="none"/><path d="M24.500 2.500v5.500h.9V2.500z" fill="#222"/><path d="M37.300 3.800l8 8m0-8l-8 8" stroke="#222" stroke-width="1.800" fill="none"/></svg>
<span class="t" style="left:1560.00px;top:472.40px;font-size:15px;line-height:15px;color:#444;transform:scaleX(0.9778);">Settings</span>
<span class="t" style="left:1562.00px;top:501.80px;font-size:15px;line-height:15px;color:#000;font-weight:700;">WindowAppMainForm</span>
<span class="t" style="left:1562.00px;top:525.15px;font-size:14px;line-height:14px;color:#1a1a1a;transform:scaleX(0.9621);">WindowAppMainForm</span>
<svg class="i" style="left:1886.5px;top:501.5px;width:15.5px;height:15px;"><use href="#i-comp16"/></svg>
<div style="left:1558.7px;top:552.7px;width:24.5px;height:26px;background:#cdcdcd;"></div>
<svg class="i" style="left:1562.5px;top:557px;width:16px;height:16px;"><use href="#i-props"/></svg>
<svg class="i" style="left:1588.5px;top:558px;width:15px;height:15.5px;"><use href="#i-bolt"/></svg>
<div style="left:1891px;top:599px;width:19px;height:342.5px;background:#cdcdcd;"></div>
<svg class="i" style="left:1895.5px;top:585.5px;width:11px;height:7px" viewBox="0 0 11 7"><path d="M1 6l4.500-4.500L10 6" stroke="#505050" stroke-width="1.600" fill="none"/></svg>
<svg class="i" style="left:1895.5px;top:1028.5px;width:11px;height:7px" viewBox="0 0 11 7"><path d="M1 1l4.500 4.500L10 1" stroke="#505050" stroke-width="1.600" fill="none"/></svg>
<div style="left:1558px;top:582px;width:331.5px;height:20.5px;background:#a9a9a9;"></div>
<span class="t" style="left:1561.00px;top:585.53px;font-size:14.5px;line-height:14.5px;color:#111;transform:scaleX(0.9564);">Component</span>
<div style="left:1709px;top:605px;width:6px;height:84px;background:#e2e2e2;"></div>
<span class="t" style="left:1583.00px;top:612.73px;font-size:14.5px;line-height:14.5px;color:#111;transform:scaleX(0.9677);">Enabled</span>
<svg class="i" style="left:1763px;top:611px;width:16px;height:16px" viewBox="0 0 16 16"><rect x=".5" y=".5" width="15" height="15" fill="#fff" stroke="#666"/><path d="M2.300 8l4.400 3.700 6.800-6.900" stroke="#222" stroke-width="2" fill="none"/></svg>
<span class="t" style="left:1583.00px;top:640.73px;font-size:14.5px;line-height:14.5px;color:#111;transform:scaleX(0.9564);">Name</span>
<div style="left:1762px;top:636px;width:126px;height:21.5px;background:#fff;border:1px solid #cdd0d6;box-sizing:border-box;"></div>
<span class="t" style="left:1583.00px;top:668.73px;font-size:14.5px;line-height:14.5px;color:#111;transform:scaleX(0.9830);">Screen Label</span>
<div style="left:1732px;top:664px;width:27px;height:22px;background:#f2f2f2;border:1px solid #adadad;box-sizing:border-box;"></div>
<div style="left:1762px;top:664px;width:126px;height:21.5px;background:#fff;border:1px solid #cdd0d6;box-sizing:border-box;"></div>
<span class="t" style="left:1766.50px;top:666.85px;font-size:14px;line-height:14px;color:#1a1a1a;transform:scaleX(0.9371);">Auto</span>
<svg class="i" style="left:1875.500px;top:673px;width:8px;height:5px" viewBox="0 0 8 5"><path d="M0 0h8L4 4.500z" fill="#111"/></svg>
<div style="left:1558px;top:691px;width:331.5px;height:20.7px;background:#a9a9a9;"></div>
<span class="t" style="left:1561.00px;top:694.53px;font-size:14.5px;line-height:14.5px;color:#111;transform:scaleX(0.9264);">Common</span>
<div style="left:1709px;top:714px;width:6px;height:112px;background:#e2e2e2;"></div>
<span class="t" style="left:1583.00px;top:721.73px;font-size:14.5px;line-height:14.5px;color:#111;transform:scaleX(1.0153);">Text</span>
<div style="left:1732px;top:717px;width:27px;height:22px;background:#f2f2f2;border:1px solid #adadad;box-sizing:border-box;"></div>
<div style="left:1762px;top:717px;width:126px;height:21.5px;background:#fff;border:1px solid #cdd0d6;box-sizing:border-box;"></div>
<span class="t" style="left:1583.00px;top:749.73px;font-size:14.5px;line-height:14.5px;color:#111;transform:scaleX(0.9658);">Visible</span>
<div style="left:1732px;top:745px;width:27px;height:22px;background:#f2f2f2;border:1px solid #adadad;box-sizing:border-box;"></div>
<svg class="i" style="left:1763px;top:748px;width:16px;height:16px" viewBox="0 0 16 16"><rect x=".5" y=".5" width="15" height="15" fill="#fff" stroke="#666"/><path d="M2.300 8l4.400 3.700 6.800-6.900" stroke="#222" stroke-width="2" fill="none"/></svg>
<span class="t" style="left:1583.00px;top:777.73px;font-size:14.5px;line-height:14.5px;color:#111;transform:scaleX(0.9852);">Read Only</span>
<div style="left:1732px;top:773px;width:27px;height:22px;background:#f2f2f2;border:1px solid #adadad;box-sizing:border-box;"></div>
<svg class="i" style="left:1763px;top:776px;width:16px;height:16px" viewBox="0 0 16 16"><rect x=".5" y=".5" width="15" height="15" fill="#fff" stroke="#666"/></svg>
<span class="t" style="left:1583.00px;top:805.73px;font-size:14.5px;line-height:14.5px;color:#111;transform:scaleX(0.9648);">Can Be Selected</span>
<div style="left:1732px;top:801px;width:27px;height:22px;background:#f2f2f2;border:1px solid #adadad;box-sizing:border-box;"></div>
<svg class="i" style="left:1763px;top:804px;width:16px;height:16px" viewBox="0 0 16 16"><rect x=".5" y=".5" width="15" height="15" fill="#fff" stroke="#666"/><path d="M2.300 8l4.400 3.700 6.800-6.900" stroke="#222" stroke-width="2" fill="none"/></svg>
<div style="left:1558px;top:828px;width:331.5px;height:20.3px;background:#a9a9a9;"></div>
<span class="t" style="left:1561.00px;top:831.53px;font-size:14.5px;line-height:14.5px;color:#111;">Layout</span>
<div style="left:1709px;top:851px;width:6px;height:140px;background:#e2e2e2;"></div>
<svg class="i" style="left:1560px;top:857.5px;width:17px;height:16px" viewBox="0 0 17 16"><rect x=".5" y=".5" width="16" height="15" fill="#f7f7f7" stroke="#adadad"/><path d="M5 7h5M7.500 4.500v5" stroke="#111" stroke-width="1" fill="none"/></svg>
<span class="t" style="left:1583.00px;top:858.73px;font-size:14.5px;line-height:14.5px;color:#111;transform:scaleX(0.9568);">Size</span>
<div style="left:1732px;top:854px;width:27px;height:22px;background:#f2f2f2;border:1px solid #adadad;box-sizing:border-box;"></div>
<div style="left:1762px;top:854px;width:126px;height:21.5px;background:#fff;border:1px solid #cdd0d6;box-sizing:border-box;"></div>
<span class="t" style="left:1766.50px;top:857.85px;font-size:14px;line-height:14px;color:#1a1a1a;transform:scaleX(0.9054);">Parent 1 1</span>
<span class="t" style="left:1583.00px;top:886.73px;font-size:14.5px;line-height:14.5px;color:#111;transform:scaleX(0.9792);">Horizontal Align...</span>
<div style="left:1732px;top:882px;width:27px;height:22px;background:#f2f2f2;border:1px solid #adadad;box-sizing:border-box;"></div>
<div style="left:1762px;top:882px;width:126px;height:21.5px;background:#fff;border:1px solid #cdd0d6;box-sizing:border-box;"></div>
<span class="t" style="left:1766.50px;top:884.85px;font-size:14px;line-height:14px;color:#1a1a1a;transform:scaleX(0.9418);">Left</span>
<svg class="i" style="left:1875.500px;top:891px;width:8px;height:5px" viewBox="0 0 8 5"><path d="M0 0h8L4 4.500z" fill="#111"/></svg>
<span class="t" style="left:1583.00px;top:914.73px;font-size:14.5px;line-height:14.5px;color:#111;transform:scaleX(0.9803);">Vertical Alignment</span>
<div style="left:1732px;top:910px;width:27px;height:22px;background:#f2f2f2;border:1px solid #adadad;box-sizing:border-box;"></div>
<div style="left:1762px;top:910px;width:126px;height:21.5px;background:#fff;border:1px solid #cdd0d6;box-sizing:border-box;"></div>
<span class="t" style="left:1766.50px;top:912.85px;font-size:14px;line-height:14px;color:#1a1a1a;transform:scaleX(1.1073);">Top</span>
<svg class="i" style="left:1875.500px;top:919px;width:8px;height:5px" viewBox="0 0 8 5"><path d="M0 0h8L4 4.500z" fill="#111"/></svg>
<svg class="i" style="left:1560px;top:941.5px;width:17px;height:16px" viewBox="0 0 17 16"><rect x=".5" y=".5" width="16" height="15" fill="#f7f7f7" stroke="#adadad"/><path d="M5 7h5M7.500 4.500v5" stroke="#111" stroke-width="1" fill="none"/></svg>
<span class="t" style="left:1583.00px;top:942.73px;font-size:14.5px;line-height:14.5px;color:#111;transform:scaleX(0.9588);">Margin</span>
<div style="left:1732px;top:938px;width:27px;height:22px;background:#f2f2f2;border:1px solid #adadad;box-sizing:border-box;"></div>
<div style="left:1762px;top:938px;width:126px;height:21.5px;background:#fff;border:1px solid #cdd0d6;box-sizing:border-box;"></div>
<span class="t" style="left:1766.50px;top:941.85px;font-size:14px;line-height:14px;color:#1a1a1a;transform:scaleX(0.8982);">Parent 0 0 0 0</span>
<span class="t" style="left:1583.00px;top:970.73px;font-size:14.5px;line-height:14.5px;color:#111;transform:scaleX(1.0027);">Top Most</span>
<div style="left:1732px;top:966px;width:27px;height:22px;background:#f2f2f2;border:1px solid #adadad;box-sizing:border-box;"></div>
<svg class="i" style="left:1763px;top:969px;width:16px;height:16px" viewBox="0 0 16 16"><rect x=".5" y=".5" width="15" height="15" fill="#fff" stroke="#666"/></svg>
<div style="left:1558px;top:993px;width:331.5px;height:20.7px;background:#a9a9a9;"></div>
<span class="t" style="left:1561.00px;top:996.53px;font-size:14.5px;line-height:14.5px;color:#111;transform:scaleX(0.9782);">Appearance</span>
<div style="left:1709px;top:1016px;width:6px;height:25px;background:#e2e2e2;"></div>
<span class="t" style="left:1583.00px;top:1023.73px;font-size:14.5px;line-height:14.5px;color:#111;transform:scaleX(0.9612);">Style</span>
<svg class="i" style="left:1719.500px;top:1027px;width:6px;height:6px" viewBox="0 0 6 6"><circle cx="3" cy="3" r="2.600" fill="#111"/></svg>
<div style="left:1732px;top:1020px;width:27px;height:20.5px;background:#f7f7f7;border:1px solid #adadad;box-sizing:border-box;"></div>
<svg class="i" style="left:1742.500px;top:1026px;width:6px;height:8px" viewBox="0 0 6 8"><path d="M0 0l5.500 4L0 8z" fill="#111"/></svg>
<span class="t" style="left:1765.80px;top:1023.65px;font-size:14px;line-height:14px;color:#1a1a1a;transform:scaleX(0.9517);">Simple.uistyle</span></body></html>
